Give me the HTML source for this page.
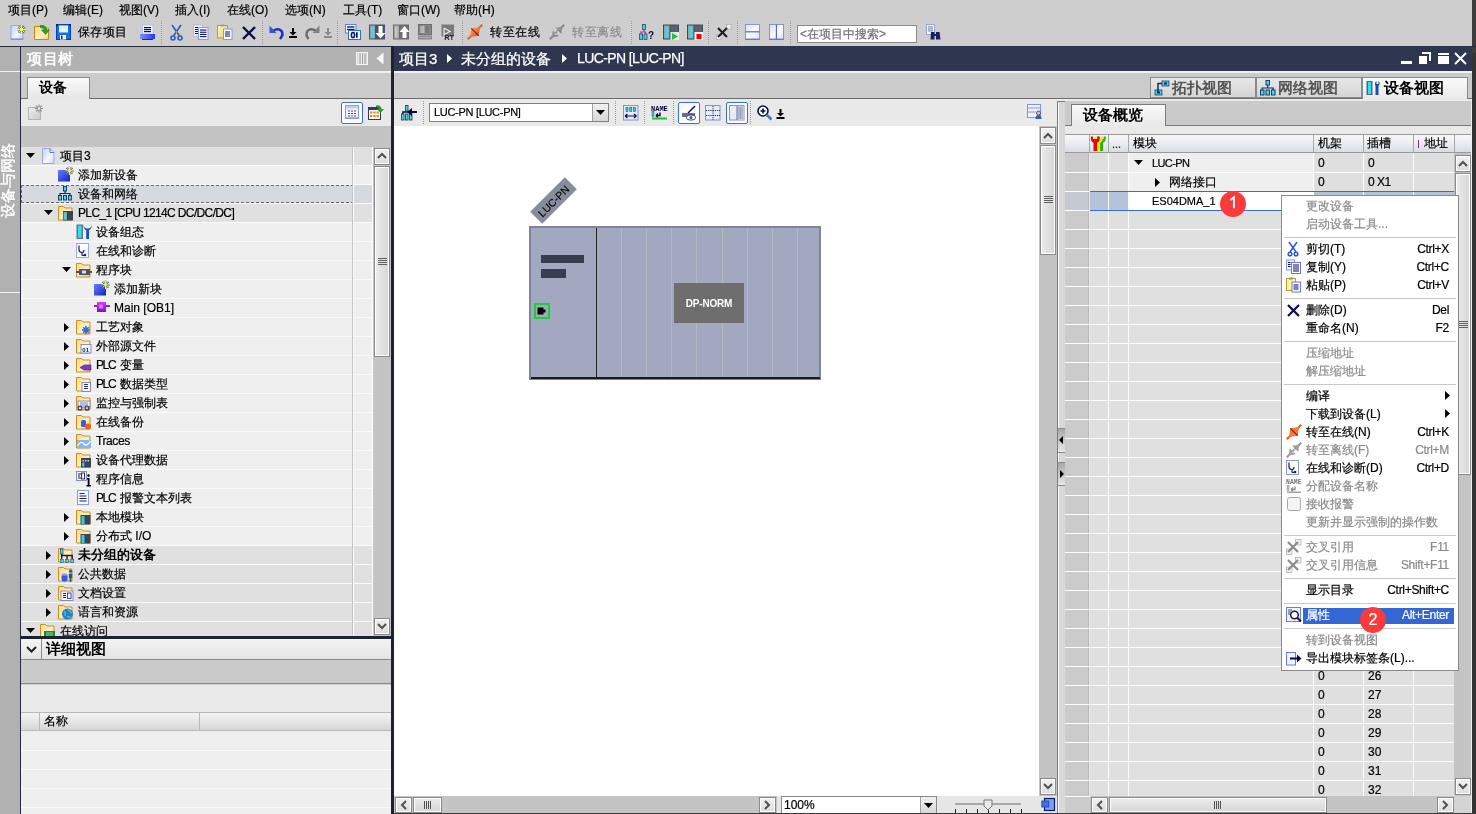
<!DOCTYPE html>
<html><head><meta charset="utf-8">
<style>
*{box-sizing:border-box;margin:0;padding:0}
html,body{width:1476px;height:814px;overflow:hidden;background:#cecece;font-family:"Liberation Sans",sans-serif;font-size:12px;color:#000}
.a{position:absolute}
.t{position:absolute;white-space:nowrap;line-height:14px;-webkit-text-stroke:0.2px currentColor}
[style*="font-weight:bold"]{-webkit-text-stroke:0 !important}
#wrap{position:absolute;left:0;top:0;width:1476px;height:814px;overflow:hidden;will-change:transform}
svg{position:absolute;overflow:visible}
.sep{position:absolute;width:1px;border-left:1px dotted #9a9a9a}
</style></head><body><div id="wrap">

<!-- MENU BAR -->
<div class="a" style="left:0;top:0;width:1476px;height:46px;background:#cecece"></div>
<div class="t" style="left:8px;top:3px">项目(P)</div>
<div class="t" style="left:63px;top:3px">编辑(E)</div>
<div class="t" style="left:119px;top:3px">视图(V)</div>
<div class="t" style="left:175px;top:3px">插入(I)</div>
<div class="t" style="left:227px;top:3px">在线(O)</div>
<div class="t" style="left:285px;top:3px">选项(N)</div>
<div class="t" style="left:343px;top:3px">工具(T)</div>
<div class="t" style="left:397px;top:3px">窗口(W)</div>
<div class="t" style="left:454px;top:3px">帮助(H)</div>
<div class="a" style="left:1472px;top:0;width:4px;height:53px;background:#3c3c3c"></div>

<!-- TOOLBAR -->
<svg style="left:10px;top:24px" width="16" height="16" viewBox="0 0 16 16">
<defs><linearGradient id="pg" x1="0" y1="0" x2="1" y2="1"><stop offset="0" stop-color="#c8d0ff"/><stop offset=".6" stop-color="#f4f6ff"/><stop offset="1" stop-color="#c0c8f8"/></linearGradient></defs>
<rect x="1" y="1.5" width="12" height="14" fill="url(#pg)" stroke="#9aa4f0" stroke-width="1"/>
<rect x="1" y="14.5" width="12" height="1" fill="#6a78e8"/>
<g stroke="#1a3a9a" stroke-width="1.6"><line x1="11.5" y1="1" x2="11.5" y2="10"/><line x1="7" y1="5.5" x2="16" y2="5.5"/><line x1="8.3" y1="2.3" x2="14.7" y2="8.7"/><line x1="14.7" y1="2.3" x2="8.3" y2="8.7"/></g>
<g stroke="#ffff30" stroke-width="1"><line x1="11.5" y1="1" x2="11.5" y2="10"/><line x1="7" y1="5.5" x2="16" y2="5.5"/><line x1="8.3" y1="2.3" x2="14.7" y2="8.7"/><line x1="14.7" y1="2.3" x2="8.3" y2="8.7"/></g>
<circle cx="11.5" cy="5.5" r="1.8" fill="#ffff30"/></svg>
<svg style="left:34px;top:24px" width="17" height="16" viewBox="0 0 17 16">
<defs><linearGradient id="fd" x1="0" y1="0" x2="1" y2="1"><stop offset="0" stop-color="#ffd878"/><stop offset=".6" stop-color="#fff0c0"/><stop offset="1" stop-color="#f8d070"/></linearGradient></defs>
<path d="M0.5 2.5h5l1.5 1.5h7.5v11.5h-14z" fill="url(#fd)" stroke="#c08818" stroke-width="1"/>
<path d="M6 1.5 Q12 0.5 13 6 L15.5 6 L11.5 10.5 L7.5 6 L10 6 Q9.5 3 6 3z" fill="#28a028" stroke="#1a7a1a" stroke-width=".5"/></svg>
<svg style="left:56px;top:24px" width="15" height="16" viewBox="0 0 15 16">
<rect x="0.5" y="0.5" width="14" height="15" fill="#1870e0" stroke="#0a40b0"/>
<rect x="3" y="1.5" width="9" height="7" fill="#e4f0fa"/>
<rect x="4" y="11" width="6" height="4.5" fill="#fff"/><rect x="5" y="11.5" width="1.6" height="3.5" fill="#0a3090"/>
<rect x="0.5" y="0.5" width="1.2" height="1.2" fill="#000"/><rect x="13.3" y="0.5" width="1.2" height="1.2" fill="#000"/></svg>
<div class="t" style="left:78px;top:25px;font-size:12px;letter-spacing:0.4px">保存项目</div>
<svg style="left:140px;top:24px" width="16" height="17" viewBox="0 0 16 17">
<defs><linearGradient id="pr" x1="0" y1="0" x2="1" y2="0"><stop offset="0" stop-color="#7a90ff"/><stop offset="1" stop-color="#2838e0"/></linearGradient></defs>
<rect x="2.5" y="1" width="10.5" height="9" fill="#f4f6ff" stroke="#b8c0ec" stroke-width="1"/>
<rect x="4" y="3" width="7" height="1.2" fill="#0a1060"/><rect x="4" y="5" width="7" height="1.2" fill="#0a1060"/><rect x="4" y="7" width="7" height="1.2" fill="#0a1060"/>
<rect x="0" y="10" width="15" height="5" fill="url(#pr)"/><rect x="2" y="15" width="11" height="1" fill="#2020c0"/></svg>
<div class="sep" style="left:161px;top:21px;height:23px"></div>
<svg style="left:170px;top:24px" width="14" height="17" viewBox="0 0 14 17">
<g stroke="#2a5ac8" stroke-width="1.6" fill="none"><line x1="2" y1="1" x2="9.5" y2="12"/><line x1="11" y1="1" x2="3.5" y2="12"/>
<circle cx="3" cy="14" r="2"/><circle cx="10" cy="14" r="2"/></g><circle cx="6.5" cy="8" r="0.9" fill="#e0b020"/></svg>
<svg style="left:193px;top:24px" width="16" height="17" viewBox="0 0 16 17">
<rect x="0.5" y="1" width="9" height="11" fill="#f4f6ff" stroke="#b0b8f0"/>
<g fill="#0a1060"><rect x="2" y="3" width="3" height="1"/><rect x="2" y="5" width="3" height="1"/><rect x="2" y="7" width="3" height="1"/><rect x="2" y="9" width="3" height="1"/></g>
<rect x="5.5" y="3.5" width="9.5" height="12" fill="#f8faff" stroke="#8a98e8"/>
<g fill="#0a1060"><rect x="7" y="5.5" width="6.5" height="1.1"/><rect x="7" y="7.7" width="6.5" height="1.1"/><rect x="7" y="9.9" width="6.5" height="1.1"/><rect x="7" y="12.1" width="6.5" height="1.1"/></g></svg>
<svg style="left:217px;top:24px" width="16" height="17" viewBox="0 0 16 17">
<defs><linearGradient id="cb" x1="0" y1="0" x2="1" y2="1"><stop offset="0" stop-color="#fff8a0"/><stop offset="1" stop-color="#e8d090"/></linearGradient></defs>
<rect x="0.5" y="1.5" width="10" height="12.5" fill="url(#cb)" stroke="#c89830"/>
<rect x="3.5" y="0.5" width="4" height="2" fill="#a0a0a0"/>
<rect x="6.5" y="5" width="8.5" height="10.5" fill="#f8faff" stroke="#8a98e8"/>
<g fill="#0a1060"><rect x="8" y="7.5" width="5" height="1"/><rect x="8" y="9.5" width="5" height="1"/><rect x="8" y="11.5" width="5" height="1"/></g></svg>
<svg style="left:242px;top:26px" width="14" height="14" viewBox="0 0 14 14"><g stroke="#0a0a50" stroke-width="2.4"><line x1="1" y1="1" x2="13" y2="13"/><line x1="13" y1="1" x2="1" y2="13"/></g></svg>
<div class="sep" style="left:262px;top:21px;height:23px"></div>
<svg style="left:269px;top:25px" width="16" height="16" viewBox="0 0 16 16">
<path d="M4 6 Q9 2.5 12.5 6 Q15 9.5 11 14" fill="none" stroke="#2030c0" stroke-width="2.6"/>
<path d="M0.5 0.5 L0.5 8 L7.5 8z" fill="#3a50e0"/></svg>
<svg style="left:289px;top:28px" width="8" height="10" viewBox="0 0 8 10"><path d="M4 0v5" stroke="#000" stroke-width="2"/><path d="M0.5 4h7L4 7.5z" fill="#000"/><rect x="0" y="8" width="8" height="2" fill="#000"/></svg>
<svg style="left:304px;top:25px" width="16" height="16" viewBox="0 0 16 16">
<path d="M12 6 Q7 2.5 3.5 6 Q1 9.5 4.5 14" fill="none" stroke="#6a6a6a" stroke-width="2.4"/>
<path d="M15.5 0.5 L15.5 8 L8.5 8z" fill="#808080"/></svg>
<svg style="left:324px;top:28px" width="8" height="10" viewBox="0 0 8 10"><path d="M4 0v5" stroke="#8a8a8a" stroke-width="2"/><path d="M0.5 4h7L4 7.5z" fill="#8a8a8a"/><rect x="0" y="8" width="8" height="2" fill="#8a8a8a"/></svg>
<div class="sep" style="left:337px;top:21px;height:23px"></div>
<svg style="left:345px;top:24px" width="16" height="17" viewBox="0 0 16 17">
<rect x="0.5" y="0.5" width="10.5" height="8.5" fill="#f8faff" stroke="#5a80d8"/>
<rect x="2" y="2.3" width="7.5" height="1.3" fill="#0a1060"/><rect x="2" y="4.8" width="7.5" height="1.3" fill="#0a1060"/>
<rect x="3.5" y="6.5" width="12" height="9" fill="#eef4ff" stroke="#3070b8"/>
<ellipse cx="8" cy="11" rx="1.6" ry="2.6" fill="none" stroke="#0a1060" stroke-width="1.5"/><rect x="11" y="8.3" width="1.7" height="5.4" fill="#0a1060"/></svg>
<svg style="left:369px;top:24px" width="16" height="17" viewBox="0 0 16 17">
<rect x="0" y="0.5" width="16" height="15" fill="#4a5266"/><rect x="1" y="1.5" width="5" height="13" fill="#9aa0aa"/><rect x="2" y="2.5" width="3" height="11" fill="#30e0e8"/>
<rect x="7" y="1.5" width="8" height="13" fill="#4a5266"/>
<path d="M9.5 2v7h-3l5 5.5 5-5.5h-3v-7z" fill="#fff"/></svg>
<svg style="left:393px;top:24px" width="16" height="17" viewBox="0 0 16 17">
<rect x="0" y="0.5" width="16" height="15" fill="#6a6a6a"/><rect x="1" y="1.5" width="5" height="13" fill="#a8a8a8"/><rect x="2" y="2.5" width="2.5" height="11" fill="#c4c4c4"/>
<rect x="7" y="1.5" width="8" height="13" fill="#707070"/>
<path d="M9.5 14v-6h-3l5-6 5 6h-3v6z" fill="#fff"/></svg>
<svg style="left:418px;top:24px" width="14" height="17" viewBox="0 0 14 17">
<rect x="0.5" y="0.5" width="13" height="10" fill="#8a8a8a" stroke="#6e6e6e"/>
<rect x="2.5" y="2" width="4" height="7" fill="#b8b8b8"/><rect x="7" y="2" width="4.5" height="7" fill="#7a7a7a"/>
<rect x="0" y="11.5" width="14" height="4" fill="#8a8a8a"/><rect x="1" y="13" width="12" height="1" fill="#b0b0b0"/></svg>
<svg style="left:441px;top:24px" width="16" height="17" viewBox="0 0 16 17">
<rect x="0.5" y="0.5" width="12.5" height="12" fill="#7a7a7a"/>
<path d="M3 4v10 M3 4l6 3.5-6 3" fill="none" stroke="#f0f0f0" stroke-width="1.1"/>
<text x="3.2" y="15.8" font-size="7.5" font-weight="bold" fill="#202020" font-family="Liberation Sans">RT</text></svg>
<div class="sep" style="left:462px;top:21px;height:23px"></div>
<svg style="left:467px;top:24px" width="16" height="16" viewBox="0 0 16 16">
<defs><linearGradient id="og" x1="0" y1="0" x2="1" y2="1"><stop offset="0" stop-color="#ffb070"/><stop offset="1" stop-color="#e04010"/></linearGradient></defs>
<line x1="0.8" y1="15.2" x2="15.2" y2="0.8" stroke="#f06020" stroke-width="2.2"/>
<path d="M3 13 L4.3 4.3 L13 3 L11.7 11.7z" fill="url(#og)"/>
<line x1="4.3" y1="4.3" x2="11.7" y2="11.7" stroke="#7a1a00" stroke-width="1.1"/></svg>
<div class="t" style="left:490px;top:25px;font-size:12px;letter-spacing:0.6px">转至在线</div>
<svg style="left:549px;top:24px" width="16" height="16" viewBox="0 0 16 16">
<defs><linearGradient id="gg" x1="0" y1="0" x2="1" y2="1"><stop offset="0" stop-color="#b8b8b8"/><stop offset="1" stop-color="#6a6a6a"/></linearGradient></defs>
<line x1="0.8" y1="15.2" x2="15.2" y2="0.8" stroke="#8a8a8a" stroke-width="2.2"/>
<path d="M2.5 13.5 L3.8 6.2 L6.2 8.6 L8.6 6.2 L6.2 3.8 L13.5 2.5 L12.2 9.8 L9.8 7.4 L7.4 9.8 L9.8 12.2z" fill="url(#gg)"/>
<path d="M6.5 10.5 L7.5 9.5 M8.5 8.5 L9.5 7.5" stroke="#f4f4f4" stroke-width="1.3"/></svg>
<div class="t" style="left:572px;top:25px;font-size:12px;letter-spacing:0.6px;color:#8c8c8c">转至离线</div>
<div class="sep" style="left:631px;top:21px;height:23px"></div>
<svg style="left:639px;top:24px" width="16" height="17" viewBox="0 0 16 17">
<g fill="#30d8e8" stroke="#404858" stroke-width=".8"><rect x="3.5" y="0.5" width="3" height="5"/><rect x="0.5" y="10" width="3" height="5.5"/><rect x="5" y="10" width="3" height="5.5"/></g>
<path d="M5 5.5v2 M2 10v-2h4.5v2" stroke="#c020c0" fill="none" stroke-width="1.2"/>
<text x="9" y="14.5" font-size="10" font-weight="bold" fill="#0a0a40" font-family="Liberation Sans">?</text></svg>
<svg style="left:663px;top:24px" width="16" height="17" viewBox="0 0 16 17">
<rect x="0" y="0.5" width="16" height="15" fill="#404858"/><rect x="1" y="1.5" width="5.5" height="13" fill="#9aa0aa"/><rect x="2.3" y="2.5" width="3" height="11" fill="#30e0e8"/>
<rect x="7.5" y="1.5" width="7.5" height="13" fill="#5a6070"/>
<rect x="7.5" y="8" width="8.5" height="8" fill="#e8e8e8"/><path d="M9 9l6 3.5-6 3.5z" fill="#20c040"/></svg>
<svg style="left:687px;top:24px" width="16" height="17" viewBox="0 0 16 17">
<rect x="0" y="0.5" width="16" height="15" fill="#404858"/><rect x="1" y="1.5" width="5.5" height="13" fill="#9aa0aa"/><rect x="2.3" y="2.5" width="3" height="11" fill="#30e0e8"/>
<rect x="7.5" y="1.5" width="7.5" height="13" fill="#5a6070"/>
<rect x="7.5" y="8" width="8.5" height="8" fill="#f0f0f0"/><rect x="9.5" y="10" width="5" height="5" fill="#f00000"/></svg>
<div class="sep" style="left:708px;top:21px;height:23px"></div>
<svg style="left:716px;top:24px" width="16" height="17" viewBox="0 0 16 17">
<rect x="10.5" y="0.5" width="4.5" height="4.5" fill="#f4f4f4" stroke="#a0a0a0" stroke-width=".6"/>
<rect x="0.5" y="11" width="4.5" height="4.5" fill="#f4f4f4" stroke="#a0a0a0" stroke-width=".6"/>
<g stroke="#202020" stroke-width="2.2"><line x1="2" y1="4" x2="11" y2="13"/><line x1="11" y1="4" x2="2" y2="13"/></g></svg>
<div class="sep" style="left:737px;top:21px;height:23px"></div>
<svg style="left:745px;top:24px" width="16" height="17" viewBox="0 0 16 17">
<defs><linearGradient id="wg" x1="0" y1="0" x2="1" y2="1"><stop offset="0" stop-color="#dce0fa"/><stop offset=".5" stop-color="#fafaff"/><stop offset="1" stop-color="#e0e4fa"/></linearGradient></defs>
<rect x="0.5" y="0.5" width="14" height="15" fill="url(#wg)" stroke="#8890e0"/>
<rect x="0.5" y="7.2" width="14" height="1.2" fill="#5a64d8"/><rect x="0.5" y="14.6" width="14" height="1" fill="#5a64d8"/></svg>
<svg style="left:769px;top:24px" width="16" height="17" viewBox="0 0 16 17">
<rect x="0.5" y="0.5" width="14" height="15" fill="url(#wg)" stroke="#8890e0"/>
<rect x="6.8" y="0.5" width="1.2" height="15" fill="#5a64d8"/><rect x="0.5" y="14.6" width="14" height="1" fill="#5a64d8"/></svg>
<div class="sep" style="left:790px;top:21px;height:23px"></div>
<div class="a" style="left:797px;top:25px;width:120px;height:18px;background:#fff;border:1px solid #8a8a8a"></div>
<div class="t" style="left:800px;top:27px;font-size:12px;color:#707070">&lt;在项目中搜索&gt;</div>
<svg style="left:926px;top:24px" width="16" height="17" viewBox="0 0 16 17">
<rect x="0.5" y="0.5" width="8" height="10" fill="#f0f4ff" stroke="#8898e0" stroke-width=".8"/>
<g fill="#5a6070"><rect x="2" y="2.5" width="5" height=".8"/><rect x="2" y="4.5" width="5" height=".8"/><rect x="2" y="6.5" width="5" height=".8"/></g>
<path d="M5 8h3.5v7.5h-4zM10 8h3.5l1 7.5h-4.5z" fill="#1a2060"/><rect x="8" y="10" width="2.5" height="2" fill="#1a2060"/></svg>

<!-- LEFT STRIP -->
<div class="a" style="left:0;top:46px;width:20px;height:768px;background:#b1b1b1"></div>
<div class="a" style="left:0;top:71px;width:20px;height:1px;background:#f4f4f4"></div>
<div class="a" style="left:0;top:292px;width:20px;height:1px;background:#f4f4f4"></div>
<div class="t" style="left:-32px;top:173px;width:80px;height:16px;line-height:16px;text-align:center;color:#fff;font-size:15px;transform:rotate(-90deg);-webkit-text-stroke:0.4px #fff">设备与网络</div>
<div class="a" style="left:0;top:46px;width:1476px;height:1px;background:#232a3a"></div>
<div class="a" style="left:20px;top:46px;width:1px;height:768px;background:#232a3a"></div>

<!-- PROJECT TREE -->
<div class="a" style="left:21px;top:47px;width:370px;height:24px;background:#b2b2b2"></div>
<div class="t" style="left:27px;top:50px;color:#fff;font-size:15px;line-height:17px;letter-spacing:0.6px;-webkit-text-stroke:0.5px #fff">项目树</div>
<div class="a" style="left:21px;top:71px;width:370px;height:2px;background:#f0f0f0"></div>
<div class="a" style="left:21px;top:73px;width:370px;height:26px;background:#cbcbcb"></div>
<div class="a" style="left:21px;top:98px;width:370px;height:1px;background:#6d6d6d"></div>
<div class="a" style="left:27px;top:77px;width:63px;height:22px;background:linear-gradient(#fafafa,#e6e6e6);border:1px solid #8a8a8a;border-bottom:none"></div>
<div class="t" style="left:39px;top:80px;font-size:14px;font-weight:bold">设备</div>
<div class="a" style="left:21px;top:99px;width:370px;height:27px;background:#e9e9e9"></div>
<div class="a" style="left:21px;top:126px;width:370px;height:21px;background:#c4c4c4"></div>
<svg width="0" height="0" style="position:absolute"><defs>
<linearGradient id="fold" x1="0" y1="0" x2="1" y2="1"><stop offset="0" stop-color="#ffd470"/><stop offset=".55" stop-color="#fff2c8"/><stop offset="1" stop-color="#f0c060"/></linearGradient>
<linearGradient id="page" x1="0" y1="0" x2="1" y2="1"><stop offset="0" stop-color="#c8d0ff"/><stop offset=".6" stop-color="#f6f8ff"/><stop offset="1" stop-color="#c8d0f8"/></linearGradient>
<linearGradient id="blue" x1="0" y1="0" x2="1" y2="1"><stop offset="0" stop-color="#6a80ff"/><stop offset="1" stop-color="#1020c0"/></linearGradient>
<linearGradient id="purp" x1="0" y1="0" x2="0" y2="1"><stop offset="0" stop-color="#d040f0"/><stop offset="1" stop-color="#8010c0"/></linearGradient>
</defs></svg>
<div class="a" style="left:21px;top:147px;width:352px;height:489px;overflow:hidden">
<div class="a" style="left:0;top:0px;width:352px;height:18px;background:#e0e0e0"></div>
<div class="a" style="left:0;top:18px;width:352px;height:1px;background:#fafafa"></div>
<div class="a" style="left:331px;top:0px;width:21px;height:18px;background:#e0e0e0"></div>
<svg style="left:5px;top:6px" width="9" height="5" viewBox="0 0 9 5"><path d="M0 0h9L4.5 5z" fill="#000"/></svg>
<svg style="left:19px;top:1px" width="16" height="16" viewBox="0 0 16 16"><path d="M2.5 0.5h7.5l4 4v11h-11.5z" fill="url(#page)" stroke="#9aa8f0"/><path d="M10 0.5v4h4" fill="none" stroke="#6070e0"/></svg>
<div class="t" style="left:39px;top:2px;">项目3</div>
<div class="a" style="left:0;top:19px;width:352px;height:18px;background:#efefef"></div>
<div class="a" style="left:0;top:37px;width:352px;height:1px;background:#fafafa"></div>
<div class="a" style="left:331px;top:19px;width:21px;height:18px;background:#efefef"></div>
<svg style="left:37px;top:20px" width="16" height="16" viewBox="0 0 16 16"><rect x="0" y="3" width="12" height="11.5" fill="url(#blue)"/><g stroke="#1a3a9a" stroke-width="1.5"><line x1="11.5" y1="-0.40000000000000036" x2="11.5" y2="8.0"/><line x1="7.3" y1="3.8" x2="15.7" y2="3.8"/><line x1="8.56" y1="0.8599999999999999" x2="14.44" y2="6.74"/><line x1="14.44" y1="0.8599999999999999" x2="8.56" y2="6.74"/></g><g stroke="#ffff20" stroke-width="1"><line x1="11.5" y1="-0.40000000000000036" x2="11.5" y2="8.0"/><line x1="7.3" y1="3.8" x2="15.7" y2="3.8"/><line x1="8.56" y1="0.8599999999999999" x2="14.44" y2="6.74"/><line x1="14.44" y1="0.8599999999999999" x2="8.56" y2="6.74"/></g><circle cx="11.5" cy="3.8" r="1.2" fill="#ffff20"/></svg>
<div class="t" style="left:57px;top:21px;">添加新设备</div>
<div class="a" style="left:0;top:38px;width:352px;height:18px;background:#d6d9de"></div>
<div class="a" style="left:0;top:56px;width:352px;height:1px;background:#fafafa"></div>
<div class="a" style="left:331px;top:38px;width:21px;height:18px;background:#d6d9de"></div>
<div class="a" style="left:0;top:38px;width:333px;height:18px;border:1px dashed #6a6a6a"></div>
<svg style="left:37px;top:39px" width="16" height="16" viewBox="0 0 16 16"><g fill="#30e0f0" stroke="#1a2a5a" stroke-width=".9"><rect x="5.5" y="0.5" width="3" height="4.5"/><rect x="0.5" y="9.5" width="3" height="4.5"/><rect x="5.5" y="9.5" width="3" height="4.5"/><rect x="10.5" y="9.5" width="3" height="4.5"/></g><path d="M7 5v2.5 M2 9.5v-2h10v2" stroke="#1a2a5a" fill="none" stroke-width="1.2"/></svg>
<div class="t" style="left:57px;top:40px;">设备和网络</div>
<div class="a" style="left:0;top:57px;width:352px;height:18px;background:#e0e0e0"></div>
<div class="a" style="left:0;top:75px;width:352px;height:1px;background:#fafafa"></div>
<div class="a" style="left:331px;top:57px;width:21px;height:18px;background:#e0e0e0"></div>
<svg style="left:23px;top:63px" width="9" height="5" viewBox="0 0 9 5"><path d="M0 0h9L4.5 5z" fill="#000"/></svg>
<svg style="left:37px;top:58px" width="16" height="16" viewBox="0 0 16 16"><path d="M0.5 1.5h5l1.5 1.5h7v12h-13.5z" fill="url(#fold)" stroke="#c89020" stroke-width="1"/><rect x="5" y="6" width="10" height="9.5" fill="#3a4458"/><rect x="5.5" y="7" width="3.5" height="8" fill="#8a94a4"/><rect x="6.3" y="8" width="2" height="6" fill="#30e0f0"/></svg>
<div class="t" style="left:57px;top:59px;"><span style="letter-spacing:-0.64px">PLC_1 [CPU 1214C DC/DC/DC]</span></div>
<div class="a" style="left:0;top:76px;width:352px;height:18px;background:#efefef"></div>
<div class="a" style="left:0;top:94px;width:352px;height:1px;background:#fafafa"></div>
<div class="a" style="left:331px;top:76px;width:21px;height:18px;background:#efefef"></div>
<svg style="left:55px;top:77px" width="16" height="16" viewBox="0 0 16 16"><rect x="0.5" y="0.5" width="6.5" height="14.5" fill="#6a7484"/><rect x="2" y="1.8" width="3.5" height="12" fill="#30e0f0"/><path d="M7.8 0.8 Q7 5 10.2 6.2 V15 H13 V6.2 Q16.2 5 15.4 0.8 L14.8 3.6 L12.6 4.6 L10.6 4.6 L8.4 3.6z" fill="#1a50b8"/></svg>
<div class="t" style="left:75px;top:78px;">设备组态</div>
<div class="a" style="left:0;top:95px;width:352px;height:18px;background:#efefef"></div>
<div class="a" style="left:0;top:113px;width:352px;height:1px;background:#fafafa"></div>
<div class="a" style="left:331px;top:95px;width:21px;height:18px;background:#efefef"></div>
<svg style="left:55px;top:96px" width="16" height="16" viewBox="0 0 16 16"><rect x="0.5" y="0.5" width="12" height="14" fill="#fafcff" stroke="#9aa8f0"/><path d="M3 2.5v4 Q3 9.5 6 9.5 Q8 9.5 8 7 M6 9.5 L6 12 Q6 13 9 12" fill="none" stroke="#1a2060" stroke-width="1.2"/><circle cx="9" cy="12" r="1.3" fill="#1a2060"/></svg>
<div class="t" style="left:75px;top:97px;">在线和诊断</div>
<div class="a" style="left:0;top:114px;width:352px;height:18px;background:#efefef"></div>
<div class="a" style="left:0;top:132px;width:352px;height:1px;background:#fafafa"></div>
<div class="a" style="left:331px;top:114px;width:21px;height:18px;background:#efefef"></div>
<svg style="left:41px;top:120px" width="9" height="5" viewBox="0 0 9 5"><path d="M0 0h9L4.5 5z" fill="#000"/></svg>
<svg style="left:55px;top:115px" width="16" height="16" viewBox="0 0 16 16"><path d="M0.5 1.5h5l1.5 1.5h7v12h-13.5z" fill="url(#fold)" stroke="#c89020" stroke-width="1"/><rect x="3" y="7" width="11" height="6" fill="#4a5468"/><rect x="6" y="8.5" width="4" height="3" fill="#d8dce8"/><rect x="0" y="9" width="3" height="2" fill="#4a5468"/><rect x="14" y="9" width="2" height="2" fill="#4a5468"/></svg>
<div class="t" style="left:75px;top:116px;">程序块</div>
<div class="a" style="left:0;top:133px;width:352px;height:18px;background:#efefef"></div>
<div class="a" style="left:0;top:151px;width:352px;height:1px;background:#fafafa"></div>
<div class="a" style="left:331px;top:133px;width:21px;height:18px;background:#efefef"></div>
<svg style="left:73px;top:134px" width="16" height="16" viewBox="0 0 16 16"><rect x="0" y="3" width="12" height="11.5" fill="url(#blue)"/><g stroke="#1a3a9a" stroke-width="1.5"><line x1="11.5" y1="-0.40000000000000036" x2="11.5" y2="8.0"/><line x1="7.3" y1="3.8" x2="15.7" y2="3.8"/><line x1="8.56" y1="0.8599999999999999" x2="14.44" y2="6.74"/><line x1="14.44" y1="0.8599999999999999" x2="8.56" y2="6.74"/></g><g stroke="#ffff20" stroke-width="1"><line x1="11.5" y1="-0.40000000000000036" x2="11.5" y2="8.0"/><line x1="7.3" y1="3.8" x2="15.7" y2="3.8"/><line x1="8.56" y1="0.8599999999999999" x2="14.44" y2="6.74"/><line x1="14.44" y1="0.8599999999999999" x2="8.56" y2="6.74"/></g><circle cx="11.5" cy="3.8" r="1.2" fill="#ffff20"/></svg>
<div class="t" style="left:93px;top:135px;">添加新块</div>
<div class="a" style="left:0;top:152px;width:352px;height:18px;background:#efefef"></div>
<div class="a" style="left:0;top:170px;width:352px;height:1px;background:#fafafa"></div>
<div class="a" style="left:331px;top:152px;width:21px;height:18px;background:#efefef"></div>
<svg style="left:73px;top:153px" width="16" height="16" viewBox="0 0 16 16"><rect x="3" y="2" width="9" height="10" fill="url(#purp)"/><rect x="0" y="5" width="3" height="2" fill="#9020d0"/><rect x="12" y="5" width="4" height="2" fill="#9020d0"/><rect x="5" y="4.5" width="4" height="4" fill="#e070ff"/></svg>
<div class="t" style="left:93px;top:154px;">Main [OB1]</div>
<div class="a" style="left:0;top:171px;width:352px;height:18px;background:#efefef"></div>
<div class="a" style="left:0;top:189px;width:352px;height:1px;background:#fafafa"></div>
<div class="a" style="left:331px;top:171px;width:21px;height:18px;background:#efefef"></div>
<svg style="left:43px;top:176px" width="5" height="9" viewBox="0 0 5 9"><path d="M0 0v9L5 4.5z" fill="#000"/></svg>
<svg style="left:55px;top:172px" width="16" height="16" viewBox="0 0 16 16"><path d="M0.5 1.5h5l1.5 1.5h7v12h-13.5z" fill="url(#fold)" stroke="#c89020" stroke-width="1"/><g stroke="#2a6ae0" stroke-width="1.6"><line x1="10" y1="7" x2="10" y2="15"/><line x1="6" y1="11" x2="14" y2="11"/><line x1="7.2" y1="8.2" x2="12.8" y2="13.8"/><line x1="12.8" y1="8.2" x2="7.2" y2="13.8"/></g></svg>
<div class="t" style="left:75px;top:173px;">工艺对象</div>
<div class="a" style="left:0;top:190px;width:352px;height:18px;background:#efefef"></div>
<div class="a" style="left:0;top:208px;width:352px;height:1px;background:#fafafa"></div>
<div class="a" style="left:331px;top:190px;width:21px;height:18px;background:#efefef"></div>
<svg style="left:43px;top:195px" width="5" height="9" viewBox="0 0 5 9"><path d="M0 0v9L5 4.5z" fill="#000"/></svg>
<svg style="left:55px;top:191px" width="16" height="16" viewBox="0 0 16 16"><path d="M0.5 1.5h5l1.5 1.5h7v12h-13.5z" fill="url(#fold)" stroke="#c89020" stroke-width="1"/><rect x="5" y="6.5" width="10" height="8.5" fill="#f4f6ff" stroke="#6a78c0" stroke-width=".8"/><text x="6.3" y="13.5" font-size="6" font-weight="bold" fill="#1a2060" font-family="Liberation Sans">01</text></svg>
<div class="t" style="left:75px;top:192px;">外部源文件</div>
<div class="a" style="left:0;top:209px;width:352px;height:18px;background:#efefef"></div>
<div class="a" style="left:0;top:227px;width:352px;height:1px;background:#fafafa"></div>
<div class="a" style="left:331px;top:209px;width:21px;height:18px;background:#efefef"></div>
<svg style="left:43px;top:214px" width="5" height="9" viewBox="0 0 5 9"><path d="M0 0v9L5 4.5z" fill="#000"/></svg>
<svg style="left:55px;top:210px" width="16" height="16" viewBox="0 0 16 16"><path d="M0.5 1.5h5l1.5 1.5h7v12h-13.5z" fill="url(#fold)" stroke="#c89020" stroke-width="1"/><path d="M4 10.5 L8 8 H15 V13 H8z" fill="#7a3ad0" stroke="#4a1a90" stroke-width=".6"/></svg>
<div class="t" style="left:75px;top:211px;"><span style="letter-spacing:-1.4px;margin-right:1.4px">PLC</span> 变量</div>
<div class="a" style="left:0;top:228px;width:352px;height:18px;background:#efefef"></div>
<div class="a" style="left:0;top:246px;width:352px;height:1px;background:#fafafa"></div>
<div class="a" style="left:331px;top:228px;width:21px;height:18px;background:#efefef"></div>
<svg style="left:43px;top:233px" width="5" height="9" viewBox="0 0 5 9"><path d="M0 0v9L5 4.5z" fill="#000"/></svg>
<svg style="left:55px;top:229px" width="16" height="16" viewBox="0 0 16 16"><path d="M0.5 1.5h5l1.5 1.5h7v12h-13.5z" fill="url(#fold)" stroke="#c89020" stroke-width="1"/><rect x="6" y="6.5" width="8.5" height="9" fill="#f4f6ff" stroke="#6a78c0" stroke-width=".8"/><path d="M8 8.5h4 M8 10.5h4 M8 12.5h4" stroke="#1a2060" stroke-width=".9"/></svg>
<div class="t" style="left:75px;top:230px;"><span style="letter-spacing:-1.4px;margin-right:1.4px">PLC</span> 数据类型</div>
<div class="a" style="left:0;top:247px;width:352px;height:18px;background:#efefef"></div>
<div class="a" style="left:0;top:265px;width:352px;height:1px;background:#fafafa"></div>
<div class="a" style="left:331px;top:247px;width:21px;height:18px;background:#efefef"></div>
<svg style="left:43px;top:252px" width="5" height="9" viewBox="0 0 5 9"><path d="M0 0v9L5 4.5z" fill="#000"/></svg>
<svg style="left:55px;top:248px" width="16" height="16" viewBox="0 0 16 16"><path d="M0.5 1.5h5l1.5 1.5h7v12h-13.5z" fill="url(#fold)" stroke="#c89020" stroke-width="1"/><rect x="2" y="6" width="12" height="6" fill="#f4f6ff" stroke="#6a78c0" stroke-width=".8"/><path d="M4 8h8 M4 10h8" stroke="#6070a0" stroke-width=".8"/><circle cx="4" cy="13" r="2" fill="none" stroke="#1a2a80" stroke-width="1.1"/><circle cx="11" cy="13" r="2" fill="none" stroke="#1a2a80" stroke-width="1.1"/></svg>
<div class="t" style="left:75px;top:249px;">监控与强制表</div>
<div class="a" style="left:0;top:266px;width:352px;height:18px;background:#efefef"></div>
<div class="a" style="left:0;top:284px;width:352px;height:1px;background:#fafafa"></div>
<div class="a" style="left:331px;top:266px;width:21px;height:18px;background:#efefef"></div>
<svg style="left:43px;top:271px" width="5" height="9" viewBox="0 0 5 9"><path d="M0 0v9L5 4.5z" fill="#000"/></svg>
<svg style="left:55px;top:267px" width="16" height="16" viewBox="0 0 16 16"><path d="M0.5 1.5h5l1.5 1.5h7v12h-13.5z" fill="url(#fold)" stroke="#c89020" stroke-width="1"/><rect x="5" y="6" width="5" height="7" rx="1.5" fill="#3a5ae0"/><circle cx="12" cy="12.5" r="3" fill="#f06010"/></svg>
<div class="t" style="left:75px;top:268px;">在线备份</div>
<div class="a" style="left:0;top:285px;width:352px;height:18px;background:#efefef"></div>
<div class="a" style="left:0;top:303px;width:352px;height:1px;background:#fafafa"></div>
<div class="a" style="left:331px;top:285px;width:21px;height:18px;background:#efefef"></div>
<svg style="left:43px;top:290px" width="5" height="9" viewBox="0 0 5 9"><path d="M0 0v9L5 4.5z" fill="#000"/></svg>
<svg style="left:55px;top:286px" width="16" height="16" viewBox="0 0 16 16"><path d="M0.5 1.5h5l1.5 1.5h7v12h-13.5z" fill="url(#fold)" stroke="#c89020" stroke-width="1"/><rect x="1" y="7" width="14" height="8" fill="#80b8f0"/><path d="M1.5 13 Q5 7 8 11 Q11 14 14.5 8" fill="none" stroke="#fff" stroke-width="1.3"/></svg>
<div class="t" style="left:75px;top:287px;"><span style="letter-spacing:-0.4px">Traces</span></div>
<div class="a" style="left:0;top:304px;width:352px;height:18px;background:#efefef"></div>
<div class="a" style="left:0;top:322px;width:352px;height:1px;background:#fafafa"></div>
<div class="a" style="left:331px;top:304px;width:21px;height:18px;background:#efefef"></div>
<svg style="left:43px;top:309px" width="5" height="9" viewBox="0 0 5 9"><path d="M0 0v9L5 4.5z" fill="#000"/></svg>
<svg style="left:55px;top:305px" width="16" height="16" viewBox="0 0 16 16"><path d="M0.5 1.5h5l1.5 1.5h7v12h-13.5z" fill="url(#fold)" stroke="#c89020" stroke-width="1"/><rect x="5" y="6" width="10" height="9.5" fill="#3a4458"/><g fill="#d0d4e0"><rect x="6.5" y="8" width="1.5" height="1.5"/><rect x="9" y="8" width="1.5" height="1.5"/><rect x="11.5" y="8" width="1.5" height="1.5"/></g><rect x="6.3" y="10.5" width="2" height="4" fill="#30e0f0"/></svg>
<div class="t" style="left:75px;top:306px;">设备代理数据</div>
<div class="a" style="left:0;top:323px;width:352px;height:18px;background:#efefef"></div>
<div class="a" style="left:0;top:341px;width:352px;height:1px;background:#fafafa"></div>
<div class="a" style="left:331px;top:323px;width:21px;height:18px;background:#efefef"></div>
<svg style="left:55px;top:324px" width="16" height="16" viewBox="0 0 16 16"><rect x="0.5" y="0.5" width="10" height="9" fill="#f4f6ff" stroke="#6a78c0" stroke-width=".8"/><path d="M2 3h3 M2 5h2 M2 7h3" stroke="#1a2060"/><rect x="5.5" y="2" width="3" height="6" fill="none" stroke="#1a2060" stroke-width=".9"/><circle cx="12.5" cy="4.5" r="1.2" fill="#000"/><path d="M11 7h2.5v7h1.5v1.5h-4.5v-1.5h1.2v-5.5h-.7z" fill="#000"/></svg>
<div class="t" style="left:75px;top:325px;">程序信息</div>
<div class="a" style="left:0;top:342px;width:352px;height:18px;background:#efefef"></div>
<div class="a" style="left:0;top:360px;width:352px;height:1px;background:#fafafa"></div>
<div class="a" style="left:331px;top:342px;width:21px;height:18px;background:#efefef"></div>
<svg style="left:55px;top:343px" width="16" height="16" viewBox="0 0 16 16"><rect x="1.5" y="0.5" width="11" height="14" fill="#f8faff" stroke="#8a98e8"/><path d="M3.5 3.5h5 M3.5 6h7 M3.5 8.5h7 M3.5 11h7" stroke="#1a2060" stroke-width="1"/></svg>
<div class="t" style="left:75px;top:344px;"><span style="letter-spacing:-1.4px;margin-right:1.4px">PLC</span> 报警文本列表</div>
<div class="a" style="left:0;top:361px;width:352px;height:18px;background:#efefef"></div>
<div class="a" style="left:0;top:379px;width:352px;height:1px;background:#fafafa"></div>
<div class="a" style="left:331px;top:361px;width:21px;height:18px;background:#efefef"></div>
<svg style="left:43px;top:366px" width="5" height="9" viewBox="0 0 5 9"><path d="M0 0v9L5 4.5z" fill="#000"/></svg>
<svg style="left:55px;top:362px" width="16" height="16" viewBox="0 0 16 16"><path d="M0.5 1.5h5l1.5 1.5h7v12h-13.5z" fill="url(#fold)" stroke="#c89020" stroke-width="1"/><rect x="4.5" y="6" width="10" height="9.5" fill="#3a4458"/><rect x="5.5" y="7" width="3" height="8" fill="#30d0e0"/></svg>
<div class="t" style="left:75px;top:363px;">本地模块</div>
<div class="a" style="left:0;top:380px;width:352px;height:18px;background:#efefef"></div>
<div class="a" style="left:0;top:398px;width:352px;height:1px;background:#fafafa"></div>
<div class="a" style="left:331px;top:380px;width:21px;height:18px;background:#efefef"></div>
<svg style="left:43px;top:385px" width="5" height="9" viewBox="0 0 5 9"><path d="M0 0v9L5 4.5z" fill="#000"/></svg>
<svg style="left:55px;top:381px" width="16" height="16" viewBox="0 0 16 16"><path d="M0.5 1.5h5l1.5 1.5h7v12h-13.5z" fill="url(#fold)" stroke="#c89020" stroke-width="1"/><rect x="4.5" y="6" width="10" height="9.5" fill="#3a4458"/><rect x="5.5" y="7" width="3" height="8" fill="#30d0e0"/></svg>
<div class="t" style="left:75px;top:382px;">分布式 I/O</div>
<div class="a" style="left:0;top:399px;width:352px;height:18px;background:#e0e0e0"></div>
<div class="a" style="left:0;top:417px;width:352px;height:1px;background:#fafafa"></div>
<div class="a" style="left:331px;top:399px;width:21px;height:18px;background:#e0e0e0"></div>
<svg style="left:25px;top:404px" width="5" height="9" viewBox="0 0 5 9"><path d="M0 0v9L5 4.5z" fill="#000"/></svg>
<svg style="left:37px;top:400px" width="16" height="16" viewBox="0 0 16 16"><path d="M0.5 1.5h5l1.5 1.5h7v12h-13.5z" fill="url(#fold)" stroke="#c89020" stroke-width="1"/><rect x="2.5" y="2" width="2.5" height="5" fill="#30e0f0" stroke="#1a2a6a" stroke-width=".6"/><path d="M3.7 7v5 M3.7 8.5h10.5V12 M9 8.5V12" stroke="#0a1a6a" stroke-width="1.4" fill="none"/><g fill="#30e0f0" stroke="#1a2a6a" stroke-width=".5"><rect x="2.2" y="12.5" width="3" height="3"/><rect x="7.5" y="12.5" width="3" height="3"/><rect x="12.8" y="12.5" width="3" height="3"/></g></svg>
<div class="t" style="left:57px;top:401px;font-weight:bold;font-size:12.8px;">未分组的设备</div>
<div class="a" style="left:0;top:418px;width:352px;height:18px;background:#e0e0e0"></div>
<div class="a" style="left:0;top:436px;width:352px;height:1px;background:#fafafa"></div>
<div class="a" style="left:331px;top:418px;width:21px;height:18px;background:#e0e0e0"></div>
<svg style="left:25px;top:423px" width="5" height="9" viewBox="0 0 5 9"><path d="M0 0v9L5 4.5z" fill="#000"/></svg>
<svg style="left:37px;top:419px" width="16" height="16" viewBox="0 0 16 16"><path d="M0.5 1.5h5l1.5 1.5h7v12h-13.5z" fill="url(#fold)" stroke="#c89020" stroke-width="1"/><rect x="3.5" y="8" width="6" height="7.5" rx="2.5" fill="#3a58e8"/><ellipse cx="6.5" cy="8.5" rx="3" ry="1.3" fill="#8aa0ff"/><circle cx="12.5" cy="5.2" r="1.6" fill="#1a5aa0"/><path d="M10.8 7.5h3.4v4.5h-0.8v3.8h-1.8v-3.8h-0.8z" fill="#1a5aa0"/></svg>
<div class="t" style="left:57px;top:420px;">公共数据</div>
<div class="a" style="left:0;top:437px;width:352px;height:18px;background:#e0e0e0"></div>
<div class="a" style="left:0;top:455px;width:352px;height:1px;background:#fafafa"></div>
<div class="a" style="left:331px;top:437px;width:21px;height:18px;background:#e0e0e0"></div>
<svg style="left:25px;top:442px" width="5" height="9" viewBox="0 0 5 9"><path d="M0 0v9L5 4.5z" fill="#000"/></svg>
<svg style="left:37px;top:438px" width="16" height="16" viewBox="0 0 16 16"><path d="M0.5 1.5h5l1.5 1.5h7v12h-13.5z" fill="url(#fold)" stroke="#c89020" stroke-width="1"/><rect x="3" y="6" width="12" height="9.5" fill="#f4f6ff" stroke="#6a78c0" stroke-width=".8"/><path d="M5 8.5h3 M5 10.5h3 M5 12.5h3" stroke="#1a2060"/><rect x="9.5" y="8" width="3.5" height="5.5" fill="none" stroke="#1a2060" stroke-width=".8"/></svg>
<div class="t" style="left:57px;top:439px;">文档设置</div>
<div class="a" style="left:0;top:456px;width:352px;height:18px;background:#e0e0e0"></div>
<div class="a" style="left:0;top:474px;width:352px;height:1px;background:#fafafa"></div>
<div class="a" style="left:331px;top:456px;width:21px;height:18px;background:#e0e0e0"></div>
<svg style="left:25px;top:461px" width="5" height="9" viewBox="0 0 5 9"><path d="M0 0v9L5 4.5z" fill="#000"/></svg>
<svg style="left:37px;top:457px" width="16" height="16" viewBox="0 0 16 16"><path d="M0.5 1.5h5l1.5 1.5h7v12h-13.5z" fill="url(#fold)" stroke="#c89020" stroke-width="1"/><circle cx="9.5" cy="10" r="5.5" fill="#2a7ad8"/><path d="M6 7 Q8 9 7 12 M10 5 Q12 8 14 9 M9 13 Q11 12 13 14" stroke="#40c0a0" stroke-width="1.6" fill="none"/></svg>
<div class="t" style="left:57px;top:458px;">语言和资源</div>
<div class="a" style="left:0;top:475px;width:352px;height:18px;background:#e0e0e0"></div>
<div class="a" style="left:0;top:493px;width:352px;height:1px;background:#fafafa"></div>
<div class="a" style="left:331px;top:475px;width:21px;height:18px;background:#e0e0e0"></div>
<svg style="left:5px;top:481px" width="9" height="5" viewBox="0 0 9 5"><path d="M0 0h9L4.5 5z" fill="#000"/></svg>
<svg style="left:19px;top:476px" width="16" height="16" viewBox="0 0 16 16"><path d="M0.5 1.5h5l1.5 1.5h7v12h-13.5z" fill="url(#fold)" stroke="#c89020" stroke-width="1"/><rect x="4" y="8" width="11" height="7.5" fill="#1a8a3a"/><path d="M6 10h7 M6 12h7" stroke="#a0f0a0" stroke-width=".8"/></svg>
<div class="t" style="left:39px;top:477px;">在线访问</div>
</div>
<div class="a" style="left:352px;top:147px;width:1px;height:489px;background:#c4c4c4"></div><div class="a" style="left:353px;top:147px;width:1px;height:489px;background:#fcfcfc"></div><div class="a" style="left:372px;top:147px;width:1px;height:489px;background:#fcfcfc"></div>
<div class="a" style="left:373px;top:147px;width:18px;height:489px;background:#c4c4c4"></div>
<div class="a" style="left:374px;top:148px;width:16px;height:17px;background:linear-gradient(#f0f0f0,#dcdcdc);border:1px solid #8a8a8a;box-shadow:inset 0 0 0 1px #fff"></div>
<svg style="left:377px;top:152px" width="10" height="7" viewBox="0 0 10 7"><path d="M1 6L5 2L9 6" fill="none" stroke="#505050" stroke-width="2"/></svg>
<div class="a" style="left:374px;top:166px;width:16px;height:191px;background:linear-gradient(90deg,#ececec,#d6d6d6);border:1px solid #8a8a8a;box-shadow:inset 0 0 0 1px #fff"></div>
<svg style="left:378px;top:258px" width="9" height="8" viewBox="0 0 9 8"><path d="M0 .5h9M0 2.5h9M0 4.5h9M0 6.5h9" stroke="#606060" stroke-width="1"/></svg>
<div class="a" style="left:374px;top:618px;width:16px;height:17px;background:linear-gradient(#f0f0f0,#dcdcdc);border:1px solid #8a8a8a;box-shadow:inset 0 0 0 1px #fff"></div>
<svg style="left:377px;top:623px" width="10" height="7" viewBox="0 0 10 7"><path d="M1 1L5 5L9 1" fill="none" stroke="#505050" stroke-width="2"/></svg><div class="a" style="left:21px;top:636px;width:370px;height:3px;background:#1c2232"></div>
<div class="a" style="left:21px;top:639px;width:370px;height:21px;background:linear-gradient(#f4f4f4,#e4e4e4);border-bottom:1px solid #8a8a8a"></div>
<div class="a" style="left:41px;top:639px;width:1px;height:20px;background:#8a8a8a"></div>
<svg style="left:26px;top:646px" width="11" height="7" viewBox="0 0 11 7"><path d="M1 1L5.5 5.5L10 1" fill="none" stroke="#202020" stroke-width="2"/></svg>
<div class="t" style="left:46px;top:641px;font-size:15px;font-weight:bold;line-height:16px">详细视图</div>
<div class="a" style="left:21px;top:660px;width:370px;height:24px;background:#cacaca;border-bottom:1px solid #8a8a8a"></div>
<div class="a" style="left:21px;top:685px;width:370px;height:129px;background:#efefef"></div><div class="a" style="left:21px;top:685px;width:370px;height:27px;background:#eaeaea"></div>
<div class="a" style="left:21px;top:712px;width:370px;height:19px;background:linear-gradient(#f2f2f2,#e6e6e6 50%,#d6d6d6);border-top:1px solid #b8b8b8;border-bottom:1px solid #b8b8b8"></div>
<div class="a" style="left:39px;top:712px;width:1px;height:19px;background:#b8b8b8"></div>
<div class="a" style="left:199px;top:712px;width:1px;height:19px;background:#b8b8b8"></div>
<div class="t" style="left:44px;top:714px">名称</div>
<div class="a" style="left:21px;top:750px;width:370px;height:1px;background:#fafafa"></div>
<div class="a" style="left:21px;top:769px;width:370px;height:1px;background:#fafafa"></div>
<div class="a" style="left:21px;top:788px;width:370px;height:1px;background:#fafafa"></div>
<div class="a" style="left:21px;top:807px;width:370px;height:1px;background:#fafafa"></div><svg style="left:356px;top:52px" width="12" height="13" viewBox="0 0 12 13"><rect x="0.5" y="0.5" width="11" height="12" fill="#d8d8d8" stroke="#f4f4f4"/><path d="M3 1v11M5.5 1v11M8 1v11" stroke="#f4f4f4" stroke-width="1"/><path d="M4 1v11M6.5 1v11M9 1v11" stroke="#a0a0a0" stroke-width="1"/></svg>
<svg style="left:376px;top:52px" width="8" height="13" viewBox="0 0 8 13"><path d="M7.5 0.5v12L0.5 6.5z" fill="#fafafa"/></svg>
<div class="a" style="left:341px;top:102px;width:22px;height:22px;background:#fafcff;border:1px solid #3a70d8;border-radius:2px"></div>
<svg style="left:345px;top:105px" width="15" height="15" viewBox="0 0 15 15"><rect x="0.5" y="0.5" width="13" height="13" fill="#eef0fc" stroke="#9098d8"/><rect x="1" y="1" width="12" height="2.5" fill="#c8cdf0"/><path d="M3 6h2M6 6h2M9 6h2M3 8.5h2M6 8.5h2M9 8.5h2M3 11h2M6 11h2M9 11h2" stroke="#5a5a70" stroke-width="1"/><rect x="0.5" y="12.5" width="13" height="1.5" fill="#8890d8"/></svg>
<svg style="left:368px;top:104px" width="17" height="16" viewBox="0 0 17 16"><rect x="0.5" y="3.5" width="12" height="12" fill="#f8f8ff" stroke="#2a3a6a"/><rect x="0.5" y="3.5" width="12" height="2.5" fill="#2a3a6a"/><g fill="#f08a00"><rect x="2" y="7.5" width="2.3" height="2"/><rect x="5.3" y="7.5" width="2.3" height="2"/><rect x="8.6" y="7.5" width="2.3" height="2"/><rect x="2" y="11" width="2.3" height="2"/><rect x="5.3" y="11" width="2.3" height="2"/><rect x="8.6" y="11" width="2.3" height="2"/></g><path d="M8 1.5 Q13 0.5 13.5 5 L16 5 L12.5 9 L9 5 L11 5 Q10.5 3 8 3z" fill="#28a028"/></svg>
<svg style="left:27px;top:104px" width="17" height="17" viewBox="0 0 17 17"><defs><linearGradient id="gp" x1="0" y1="0" x2="1" y2="1"><stop offset="0" stop-color="#f0f0f0"/><stop offset="1" stop-color="#c8c8c8"/></linearGradient></defs><rect x="1.5" y="3.5" width="12" height="12" fill="url(#gp)" stroke="#b4b4b4"/><g stroke="#8a8a8a" stroke-width="1.1"><line x1="12" y1="0.5" x2="12" y2="8.5"/><line x1="8" y1="4.5" x2="16" y2="4.5"/><line x1="9.2" y1="1.7" x2="14.8" y2="7.3"/><line x1="14.8" y1="1.7" x2="9.2" y2="7.3"/></g><circle cx="12" cy="4.5" r="1.2" fill="#f4f4f4"/></svg>

<!-- divider -->
<div class="a" style="left:391px;top:46px;width:3px;height:768px;background:#1c2232"></div>

<!-- EDITOR -->
<div class="a" style="left:394px;top:46px;width:1078px;height:25px;background:#2e3650"></div>
<div class="a" style="left:394px;top:71px;width:1078px;height:2px;background:#f0f0f0"></div>
<div class="a" style="left:394px;top:73px;width:1078px;height:26px;background:#cbcbcb"></div>
<div class="a" style="left:394px;top:98px;width:1078px;height:1px;background:#6d6d6d"></div>
<div class="a" style="left:394px;top:99px;width:663px;height:27px;background:#e9e9e9"></div>
<div class="a" style="left:394px;top:126px;width:645px;height:670px;background:#fff"></div>
<div class="t" style="left:399px;top:50px;color:#fff;font-size:15px;line-height:17px;-webkit-text-stroke:0.25px #fff">项目3</div>
<svg style="left:447px;top:54px" width="5" height="9" viewBox="0 0 5 9"><path d="M0 0v9L5 4.5z" fill="#fff"/></svg>
<div class="t" style="left:461px;top:50px;color:#fff;font-size:15px;line-height:17px;-webkit-text-stroke:0.25px #fff">未分组的设备</div>
<svg style="left:562px;top:54px" width="5" height="9" viewBox="0 0 5 9"><path d="M0 0v9L5 4.5z" fill="#fff"/></svg>
<div class="t" style="left:577px;top:50px;color:#fff;font-size:14px;line-height:17px;letter-spacing:-0.6px;-webkit-text-stroke:0.25px #fff">LUC-PN [LUC-PN]</div>
<div class="a" style="left:1401px;top:61px;width:11px;height:3px;background:#fff"></div>
<svg style="left:1418px;top:52px" width="14" height="13" viewBox="0 0 14 13"><path d="M4 1h8v8" fill="none" stroke="#fff" stroke-width="2"/><rect x="1" y="4" width="8" height="8" fill="#fff"/></svg>
<div class="a" style="left:1438px;top:53px;width:11px;height:2px;background:#fff"></div><div class="a" style="left:1438px;top:56px;width:11px;height:8px;background:#fff"></div>
<svg style="left:1454px;top:52px" width="13" height="13" viewBox="0 0 13 13"><path d="M1 1L12 12M12 1L1 12" stroke="#fff" stroke-width="2"/></svg>
<div class="a" style="left:1472px;top:53px;width:4px;height:761px;background:#333"></div>
<div class="a" style="left:1150px;top:77px;width:106px;height:21px;background:linear-gradient(#e8e8e8,#d4d4d4);border:1px solid #8a8a8a;border-bottom:1px solid #8a8a8a"></div>
<div class="t" style="left:1172px;top:79px;font-size:15px;font-weight:bold;line-height:17px;color:#555">拓扑视图</div>
<svg style="left:1154px;top:80px" width="16" height="16" viewBox="0 0 16 16"><rect x="8" y="1" width="7" height="5" fill="#30d8e8" stroke="#2a3a6a" stroke-width=".8"/><rect x="1" y="10" width="7" height="5" fill="#30d8e8" stroke="#2a3a6a" stroke-width=".8"/><path d="M8 3.5H4V12.5" fill="none" stroke="#1a2a5a" stroke-width="1.5"/><rect x="10" y="2.5" width="3" height="2" fill="#1a2a5a"/><rect x="3" y="11.5" width="3" height="2" fill="#1a2a5a"/></svg>
<div class="a" style="left:1256px;top:77px;width:106px;height:21px;background:linear-gradient(#e8e8e8,#d4d4d4);border:1px solid #8a8a8a;border-bottom:1px solid #8a8a8a"></div>
<div class="t" style="left:1278px;top:79px;font-size:15px;font-weight:bold;line-height:17px;color:#555">网络视图</div>
<svg style="left:1260px;top:80px" width="16" height="16" viewBox="0 0 16 16"><g fill="#30e0f0" stroke="#1a2a5a" stroke-width=".9"><rect x="6" y="0.5" width="3.5" height="4.5"/><rect x="0.5" y="10" width="3.5" height="5"/><rect x="6" y="10" width="3.5" height="5"/><rect x="11.5" y="10" width="3.5" height="5"/></g><path d="M7.7 5v2.5 M2.2 10v-2h11v2" stroke="#1a2a5a" fill="none" stroke-width="1.2"/></svg>
<div class="a" style="left:1362px;top:77px;width:106px;height:22px;background:linear-gradient(#fafafa,#e9e9e9);border:1px solid #8a8a8a;border-bottom:none"></div>
<div class="t" style="left:1384px;top:79px;font-size:15px;font-weight:bold;line-height:17px;color:#000">设备视图</div>
<svg style="left:1366px;top:80px" width="16" height="16" viewBox="0 0 16 16"><rect x="0.5" y="1" width="6" height="14" fill="#5a6474"/><rect x="2" y="2" width="3" height="12" fill="#30e0f0"/><path d="M10.5 1 Q8 3 9.5 6 L9.5 15 L12.5 15 L12.5 6 Q15 3 12.5 1 L12.5 4 L10.5 4z" fill="#1a4ab0"/></svg>
<svg style="left:401px;top:105px" width="17" height="16" viewBox="0 0 17 16"><g fill="#30e0f0" stroke="#3a4050" stroke-width=".9"><rect x="4.5" y="0.5" width="2.5" height="5.5"/><rect x="0.5" y="9" width="2.5" height="6"/><rect x="4.5" y="9" width="2.5" height="6"/><rect x="8.5" y="9" width="2.5" height="6"/></g><path d="M1.8 9v-2h8v2" stroke="#0a0a40" fill="none" stroke-width="1.3"/><path d="M7 7h9" stroke="#0a0a40" stroke-width="2"/><path d="M6 7L11 3v8z" fill="#0a0a40"/></svg>
<div class="sep" style="left:423px;top:101px;height:23px"></div>
<div class="a" style="left:429px;top:103px;width:180px;height:19px;background:#fff;border:1px solid #808080"></div>
<div class="a" style="left:592px;top:104px;width:16px;height:17px;background:linear-gradient(#f0f0f0,#d8d8d8);border-left:1px solid #a0a0a0"></div>
<svg style="left:596px;top:110px" width="9" height="5" viewBox="0 0 9 5"><path d="M0 0h9L4.5 5z" fill="#000"/></svg>
<div class="t" style="left:434px;top:105px;font-size:11px;letter-spacing:-0.3px">LUC-PN [LUC-PN]</div>
<div class="sep" style="left:615px;top:101px;height:23px"></div>
<svg style="left:623px;top:105px" width="16" height="16" viewBox="0 0 16 16"><rect x="0.5" y="0.5" width="14.5" height="14.5" fill="#e8ecfa" stroke="#8890d8"/><g fill="#30d0e0" stroke="#3a4a70" stroke-width=".6"><rect x="3" y="2.5" width="2" height="4"/><rect x="6.8" y="2.5" width="2" height="4"/><rect x="10.5" y="2.5" width="2" height="4"/></g><path d="M2 11h11.5 M2 11l2.5-2 M2 11l2.5 2 M13.5 11l-2.5-2 M13.5 11l-2.5 2" stroke="#0a0a40" stroke-width="1.1" fill="none"/></svg>
<div class="sep" style="left:644px;top:101px;height:23px"></div>
<svg style="left:651px;top:104px" width="17" height="16" viewBox="0 0 17 16"><text x="0" y="6.5" font-size="7" font-weight="bold" fill="#0a0a40" font-family="Liberation Mono">NAME</text><rect x="1" y="7.5" width="2" height="5" fill="#30d0e0" stroke="#3a4a70" stroke-width=".5"/><path d="M9 8.5v3h-4 M5 11.5l2-2 M5 11.5l2 2" stroke="#0a0a40" stroke-width="1.4" fill="none"/><rect x="1" y="13.5" width="15" height="2" fill="#20c030"/></svg>
<div class="sep" style="left:673px;top:101px;height:23px"></div>
<div class="a" style="left:678px;top:102px;width:22px;height:22px;background:#fafcff;border:1px solid #3a70d8;border-radius:2px"></div>
<svg style="left:681px;top:105px" width="16" height="16" viewBox="0 0 16 16"><path d="M7 8L14 1" stroke="#0a0a40" stroke-width="1.5"/><rect x="1" y="8" width="13" height="4" fill="#6a7080"/><ellipse cx="10" cy="12.5" rx="4.5" ry="2.5" fill="#fff" stroke="#1a2a80" stroke-width=".9"/><circle cx="10" cy="12.5" r="1.5" fill="#2a50e0"/></svg>
<svg style="left:705px;top:105px" width="16" height="16" viewBox="0 0 16 16"><rect x="0.5" y="0.5" width="14.5" height="14.5" fill="#e8ecfa" stroke="#8890d8"/><path d="M1 5.5h14 M1 10.5h14 M8 1v14" stroke="#2a2a5a" stroke-width="1" stroke-dasharray="1.2 1"/></svg>
<div class="a" style="left:726px;top:102px;width:22px;height:22px;background:#fafcff;border:1px solid #3a70d8;border-radius:2px"></div>
<svg style="left:729px;top:105px" width="16" height="16" viewBox="0 0 16 16"><rect x="0.5" y="0.5" width="14.5" height="14.5" fill="#e8ecfa" stroke="#8890d8"/><rect x="8" y="1" width="6.5" height="14" fill="#c8cce0"/><path d="M8 1v14" stroke="#6a70b0"/><path d="M9.5 3h4 M9.5 5h4 M9.5 7h4 M9.5 9h4 M9.5 11h4 M9.5 13h4" stroke="#4a5070" stroke-width=".8" stroke-dasharray="1 .6"/></svg>
<div class="sep" style="left:750px;top:101px;height:23px"></div>
<svg style="left:757px;top:105px" width="16" height="16" viewBox="0 0 16 16"><circle cx="6" cy="6" r="5" fill="#fff" stroke="#0a0a40" stroke-width="1.6"/><path d="M3.5 6h5M6 3.5v5" stroke="#0a0a40" stroke-width="1.6"/><path d="M9.5 9.5l5 5" stroke="#4a7ab0" stroke-width="2.6"/></svg>
<svg style="left:776px;top:109px" width="9" height="10" viewBox="0 0 9 10"><path d="M4.5 0v5" stroke="#000" stroke-width="2"/><path d="M1 4h7L4.5 7.5z" fill="#000"/><rect x="0.5" y="8" width="8" height="2" fill="#000"/></svg>
<svg style="left:1027px;top:104px" width="16" height="16" viewBox="0 0 16 16"><rect x="0.5" y="0.5" width="13" height="13" fill="#f0f2ff" stroke="#8890e0"/><path d="M1 4h12 M1 8h8" stroke="#8890e0"/><circle cx="11.5" cy="9" r="2" fill="#f0c090" stroke="#0a0a40" stroke-width=".6"/><path d="M8.5 15 Q8.5 11 11.5 11 Q14.5 11 14.5 15z" fill="#2a60b0"/></svg>
<div class="a" style="left:528.5px;top:192px;width:49px;height:17px;background:#878c9c;transform:rotate(-45deg);transform-origin:50% 50%"></div>
<div class="t" style="left:528.5px;top:193.5px;width:49px;text-align:center;font-size:10.5px;color:#000;transform:rotate(-45deg);-webkit-text-stroke:0.1px #000">LUC-PN</div>
<div class="a" style="left:529px;top:226px;width:292px;height:154px;background:#a3a8c1;border:2px solid #7f8498;border-top-width:2px"></div>
<div class="a" style="left:531px;top:377px;width:289px;height:1.6px;background:#1a1a1a"></div>
<div class="a" style="left:596px;top:228px;width:1.4px;height:150px;background:#222"></div>
<div class="a" style="left:621px;top:228px;width:1px;height:149px;background:#b4b8c6"></div>
<div class="a" style="left:646px;top:228px;width:1px;height:149px;background:#b4b8c6"></div>
<div class="a" style="left:671px;top:228px;width:1px;height:149px;background:#b4b8c6"></div>
<div class="a" style="left:696px;top:228px;width:1px;height:149px;background:#b4b8c6"></div>
<div class="a" style="left:722px;top:228px;width:1px;height:149px;background:#b4b8c6"></div>
<div class="a" style="left:747px;top:228px;width:1px;height:149px;background:#b4b8c6"></div>
<div class="a" style="left:772px;top:228px;width:1px;height:149px;background:#b4b8c6"></div>
<div class="a" style="left:797px;top:228px;width:1px;height:149px;background:#b4b8c6"></div>
<div class="a" style="left:541px;top:255px;width:43px;height:8px;background:#363e50"></div>
<div class="a" style="left:541px;top:269px;width:25px;height:9px;background:#363e50"></div>
<div class="a" style="left:534px;top:303px;width:16px;height:16px;border:2px solid #18d030"></div>
<svg style="left:536px;top:305px" width="12" height="12" viewBox="0 0 12 12"><path d="M1.5 2.5h6v2h2v3h-2v2h-6z" fill="#000"/></svg>
<div class="a" style="left:674px;top:283px;width:70px;height:40px;background:#6e6e6e"></div>
<div class="t" style="left:674px;top:297px;width:70px;text-align:center;color:#fff;font-weight:bold;font-size:10px;letter-spacing:-0.2px">DP-NORM</div>
<div class="a" style="left:1039px;top:126px;width:18px;height:670px;background:#c4c4c4"></div>
<div class="a" style="left:1040px;top:127px;width:16px;height:17px;background:linear-gradient(#f2f2f2,#dcdcdc);border:1px solid #8a8a8a;box-shadow:inset 0 0 0 1px #fff"></div>
<svg style="left:1043px;top:132px" width="10" height="7" viewBox="0 0 10 7"><path d="M1 6L5 2L9 6" fill="none" stroke="#505050" stroke-width="2"/></svg>
<div class="a" style="left:1040px;top:145px;width:16px;height:110px;background:linear-gradient(90deg,#ececec,#d6d6d6);border:1px solid #8a8a8a;box-shadow:inset 0 0 0 1px #fff"></div>
<svg style="left:1044px;top:196px" width="9" height="8" viewBox="0 0 9 8"><path d="M0 .5h9M0 2.5h9M0 4.5h9M0 6.5h9" stroke="#606060" stroke-width="1"/></svg>
<div class="a" style="left:1040px;top:778px;width:16px;height:17px;background:linear-gradient(#f2f2f2,#dcdcdc);border:1px solid #8a8a8a;box-shadow:inset 0 0 0 1px #fff"></div>
<svg style="left:1043px;top:783px" width="10" height="7" viewBox="0 0 10 7"><path d="M1 1L5 5L9 1" fill="none" stroke="#505050" stroke-width="2"/></svg>
<div class="a" style="left:394px;top:796px;width:663px;height:17px;background:#c4c4c4"></div>
<div class="a" style="left:394px;top:813px;width:1082px;height:1px;background:#3a3a3a"></div>
<div class="a" style="left:395px;top:797px;width:17px;height:16px;background:linear-gradient(#f2f2f2,#dcdcdc);border:1px solid #8a8a8a;box-shadow:inset 0 0 0 1px #fff"></div>
<svg style="left:400px;top:800px" width="7" height="10" viewBox="0 0 7 10"><path d="M6 1L2 5L6 9" fill="none" stroke="#505050" stroke-width="2"/></svg>
<div class="a" style="left:413px;top:797px;width:29px;height:16px;background:linear-gradient(#ececec,#d6d6d6);border:1px solid #8a8a8a;box-shadow:inset 0 0 0 1px #fff"></div>
<svg style="left:424px;top:801px" width="7" height="8" viewBox="0 0 7 8"><path d="M.5 0v8M2.5 0v8M4.5 0v8M6.5 0v8" stroke="#505050" stroke-width="1"/></svg>
<div class="a" style="left:759px;top:797px;width:17px;height:16px;background:linear-gradient(#f2f2f2,#dcdcdc);border:1px solid #8a8a8a;box-shadow:inset 0 0 0 1px #fff"></div>
<svg style="left:764px;top:800px" width="7" height="10" viewBox="0 0 7 10"><path d="M1 1L5 5L1 9" fill="none" stroke="#505050" stroke-width="2"/></svg>
<div class="a" style="left:777px;top:796px;width:280px;height:17px;background:#e6e6e6"></div>
<div class="a" style="left:781px;top:796px;width:156px;height:17px;background:#fff;border:1px solid #8a8a8a;border-bottom:none"></div>
<div class="a" style="left:920px;top:797px;width:16px;height:16px;background:linear-gradient(#f0f0f0,#d8d8d8);border-left:1px solid #a0a0a0"></div>
<svg style="left:924px;top:803px" width="9" height="5" viewBox="0 0 9 5"><path d="M0 0h9L4.5 5z" fill="#000"/></svg>
<div class="t" style="left:784px;top:798px;font-size:12px">100%</div>
<svg style="left:955px;top:799px" width="68" height="15" viewBox="0 0 68 15"><path d="M0 5h66" stroke="#6a6a6a" stroke-width="1"/><path d="M0.5 10v4 M11.5 10v4 M22.5 10v4 M33.5 10v4 M44.5 10v4 M55.5 10v4 M66.5 10v4" stroke="#222" stroke-width="1"/><path d="M29 1h8v6l-4 4-4-4z" fill="#e8e8e8" stroke="#7a7a7a" stroke-width="1"/></svg>
<svg style="left:1041px;top:797px" width="15" height="15" viewBox="0 0 15 15"><rect x="3.5" y="1.5" width="10" height="12" fill="#7aa0f0" stroke="#0a1a70" stroke-width="1.2"/><rect x="0.8" y="4" width="7" height="6" fill="#4070e0" stroke="#2040b0" stroke-width=".8"/></svg>
<div class="a" style="left:1057px;top:99px;width:15px;height:2px;background:#ececec"></div>
<div class="a" style="left:1057px;top:101px;width:1px;height:712px;background:#7a7a7a"></div>
<div class="a" style="left:1057px;top:101px;width:8px;height:1px;background:#7a7a7a"></div>
<div class="a" style="left:1058px;top:102px;width:1px;height:711px;background:#fafafa"></div>
<div class="a" style="left:1059px;top:102px;width:6px;height:711px;background:#d8d8d8"></div>
<div class="a" style="left:1058px;top:428px;width:7px;height:25px;background:linear-gradient(#a8a8a8,#e8e8e8);border-top:1px solid #8a8a8a;border-bottom:1px solid #8a8a8a"></div>
<svg style="left:1059px;top:436px" width="5" height="8" viewBox="0 0 5 8"><path d="M4 0v8L0 4z" fill="#000"/></svg>
<div class="a" style="left:1058px;top:462px;width:7px;height:24px;background:linear-gradient(#a8a8a8,#e8e8e8);border-top:1px solid #8a8a8a;border-bottom:1px solid #8a8a8a"></div>
<svg style="left:1060px;top:470px" width="5" height="8" viewBox="0 0 5 8"><path d="M0 0v8L4 4z" fill="#000"/></svg>
<div class="a" style="left:1065px;top:99px;width:407px;height:714px;background:#ebebeb"></div>
<div class="a" style="left:1065px;top:101px;width:407px;height:24px;background:#cacaca"></div>
<div class="a" style="left:1065px;top:125px;width:407px;height:1px;background:#7a7a7a"></div>
<div class="a" style="left:1071px;top:104px;width:95px;height:22px;background:linear-gradient(#fafafa,#e9e9e9);border:1px solid #7a7a7a;border-bottom:none"></div>
<div class="t" style="left:1083px;top:106px;font-size:15px;line-height:17px;font-weight:bold">设备概览</div>
<div class="a" style="left:1065px;top:126px;width:407px;height:8px;background:#e9e9e9"></div>
<div class="a" style="left:1065px;top:134px;width:407px;height:19px;background:linear-gradient(#f6f6f6 0%,#eceef2 45%,#d8dce4 100%);border-top:1px solid #9a9a9a;border-bottom:1px solid #9a9a9a"></div>
<div class="a" style="left:1089px;top:135px;width:1px;height:17px;background:#a8a8a8"></div>
<div class="a" style="left:1108px;top:135px;width:1px;height:17px;background:#a8a8a8"></div>
<div class="a" style="left:1128px;top:135px;width:1px;height:17px;background:#a8a8a8"></div>
<div class="a" style="left:1313px;top:135px;width:1px;height:17px;background:#a8a8a8"></div>
<div class="a" style="left:1363px;top:135px;width:1px;height:17px;background:#a8a8a8"></div>
<div class="a" style="left:1413px;top:135px;width:1px;height:17px;background:#a8a8a8"></div>
<div class="a" style="left:1454px;top:135px;width:1px;height:17px;background:#a8a8a8"></div>
<svg style="left:1090px;top:136px" width="18" height="16" viewBox="0 0 18 16"><path transform="translate(6.5,0)" d="M0.3 1.5 Q0 5.5 3 6.8 L3 15 L6.6 15 L6.6 6.8 Q9.6 5.5 9.3 1.5 L9.3 0.5 L7.3 0.5 L7 3 L2.6 3 L2.3 0.5 L0.3 0.5z" fill="#28b020"/><path transform="translate(3.5,0)" d="M0.3 1.5 Q0 5.5 3 6.8 L3 15 L6.6 15 L6.6 6.8 Q9.6 5.5 9.3 1.5 L9.3 0.5 L7.3 0.5 L7 3 L2.6 3 L2.3 0.5 L0.3 0.5z" fill="#f8e800"/><path transform="translate(0.5,0)" d="M0.3 1.5 Q0 5.5 3 6.8 L3 15 L6.6 15 L6.6 6.8 Q9.6 5.5 9.3 1.5 L9.3 0.5 L7.3 0.5 L7 3 L2.6 3 L2.3 0.5 L0.3 0.5z" fill="#e00a0a"/></svg>
<div class="t" style="left:1112px;top:137px;font-size:11px;color:#222">...</div>
<div class="t" style="left:1133px;top:136px">模块</div>
<div class="t" style="left:1318px;top:136px">机架</div>
<div class="t" style="left:1367px;top:136px">插槽</div>
<div class="a" style="left:1418px;top:140px;width:1px;height:8px;background:#7a2a9a"></div>
<div class="t" style="left:1424px;top:136px">地址</div>
<div class="a" style="left:1065px;top:153px;width:24px;height:19px;background:#cbcbcb;border-right:1px solid #b8b8b8"></div>
<div class="a" style="left:1090px;top:153px;width:18px;height:19px;background:#dfdfdf"></div>
<div class="a" style="left:1109px;top:153px;width:19px;height:19px;background:#dfdfdf"></div>
<div class="a" style="left:1129px;top:153px;width:184px;height:19px;background:#efefef"></div>
<div class="a" style="left:1314px;top:153px;width:49px;height:19px;background:#dfdfdf"></div>
<div class="a" style="left:1364px;top:153px;width:49px;height:19px;background:#dfdfdf"></div>
<div class="a" style="left:1414px;top:153px;width:40px;height:19px;background:#dfdfdf"></div>
<div class="a" style="left:1065px;top:172px;width:389px;height:1px;background:#fdfdfd"></div>
<svg style="left:1134px;top:160px" width="9" height="5" viewBox="0 0 9 5"><path d="M0 0h9L4.5 5z" fill="#000"/></svg>
<div class="t" style="left:1152px;top:156px;font-size:11px;letter-spacing:-0.6px">LUC-PN</div>
<div class="t" style="left:1318px;top:156px">0</div><div class="t" style="left:1368px;top:156px">0</div>
<div class="a" style="left:1065px;top:173px;width:24px;height:18px;background:#cbcbcb;border-right:1px solid #b8b8b8"></div>
<div class="a" style="left:1090px;top:173px;width:18px;height:18px;background:#dfdfdf"></div>
<div class="a" style="left:1109px;top:173px;width:19px;height:18px;background:#dfdfdf"></div>
<div class="a" style="left:1129px;top:173px;width:184px;height:18px;background:#efefef"></div>
<div class="a" style="left:1314px;top:173px;width:49px;height:18px;background:#dfdfdf"></div>
<div class="a" style="left:1364px;top:173px;width:49px;height:18px;background:#dfdfdf"></div>
<div class="a" style="left:1414px;top:173px;width:40px;height:18px;background:#dfdfdf"></div>
<div class="a" style="left:1065px;top:191px;width:389px;height:1px;background:#fdfdfd"></div>
<svg style="left:1155px;top:178px" width="5" height="9" viewBox="0 0 5 9"><path d="M0 0v9L5 4.5z" fill="#000"/></svg>
<div class="t" style="left:1169px;top:175px">网络接口</div>
<div class="t" style="left:1318px;top:175px">0</div><div class="t" style="left:1368px;top:175px;letter-spacing:-0.5px">0 X1</div>
<div class="a" style="left:1065px;top:192px;width:24px;height:18px;background:#c4cad2;border-right:1px solid #b8b8b8"></div>
<div class="a" style="left:1090px;top:192px;width:18px;height:18px;background:#b4c2da"></div>
<div class="a" style="left:1109px;top:192px;width:19px;height:18px;background:#b4c2da"></div>
<div class="a" style="left:1129px;top:192px;width:184px;height:18px;background:#ffffff"></div>
<div class="a" style="left:1314px;top:192px;width:49px;height:18px;background:#b4c2da"></div>
<div class="a" style="left:1364px;top:192px;width:49px;height:18px;background:#b4c2da"></div>
<div class="a" style="left:1414px;top:192px;width:40px;height:18px;background:#b4c2da"></div>
<div class="a" style="left:1065px;top:210px;width:389px;height:1px;background:#fdfdfd"></div>
<div class="t" style="left:1152px;top:194px;font-size:11px;letter-spacing:0px">ES04DMA_1</div>
<div class="a" style="left:1065px;top:211px;width:24px;height:18px;background:#cbcbcb;border-right:1px solid #b8b8b8"></div>
<div class="a" style="left:1090px;top:211px;width:18px;height:18px;background:#dfdfdf"></div>
<div class="a" style="left:1109px;top:211px;width:19px;height:18px;background:#dfdfdf"></div>
<div class="a" style="left:1129px;top:211px;width:184px;height:18px;background:#e0e0e0"></div>
<div class="a" style="left:1314px;top:211px;width:49px;height:18px;background:#dfdfdf"></div>
<div class="a" style="left:1364px;top:211px;width:49px;height:18px;background:#dfdfdf"></div>
<div class="a" style="left:1414px;top:211px;width:40px;height:18px;background:#dfdfdf"></div>
<div class="a" style="left:1065px;top:229px;width:389px;height:1px;background:#fdfdfd"></div>
<div class="t" style="left:1318px;top:213px">0</div><div class="t" style="left:1368px;top:213px">2</div>
<div class="a" style="left:1065px;top:230px;width:24px;height:18px;background:#cbcbcb;border-right:1px solid #b8b8b8"></div>
<div class="a" style="left:1090px;top:230px;width:18px;height:18px;background:#dfdfdf"></div>
<div class="a" style="left:1109px;top:230px;width:19px;height:18px;background:#dfdfdf"></div>
<div class="a" style="left:1129px;top:230px;width:184px;height:18px;background:#e0e0e0"></div>
<div class="a" style="left:1314px;top:230px;width:49px;height:18px;background:#dfdfdf"></div>
<div class="a" style="left:1364px;top:230px;width:49px;height:18px;background:#dfdfdf"></div>
<div class="a" style="left:1414px;top:230px;width:40px;height:18px;background:#dfdfdf"></div>
<div class="a" style="left:1065px;top:248px;width:389px;height:1px;background:#fdfdfd"></div>
<div class="t" style="left:1318px;top:232px">0</div><div class="t" style="left:1368px;top:232px">3</div>
<div class="a" style="left:1065px;top:249px;width:24px;height:18px;background:#cbcbcb;border-right:1px solid #b8b8b8"></div>
<div class="a" style="left:1090px;top:249px;width:18px;height:18px;background:#dfdfdf"></div>
<div class="a" style="left:1109px;top:249px;width:19px;height:18px;background:#dfdfdf"></div>
<div class="a" style="left:1129px;top:249px;width:184px;height:18px;background:#e0e0e0"></div>
<div class="a" style="left:1314px;top:249px;width:49px;height:18px;background:#dfdfdf"></div>
<div class="a" style="left:1364px;top:249px;width:49px;height:18px;background:#dfdfdf"></div>
<div class="a" style="left:1414px;top:249px;width:40px;height:18px;background:#dfdfdf"></div>
<div class="a" style="left:1065px;top:267px;width:389px;height:1px;background:#fdfdfd"></div>
<div class="t" style="left:1318px;top:251px">0</div><div class="t" style="left:1368px;top:251px">4</div>
<div class="a" style="left:1065px;top:268px;width:24px;height:18px;background:#cbcbcb;border-right:1px solid #b8b8b8"></div>
<div class="a" style="left:1090px;top:268px;width:18px;height:18px;background:#dfdfdf"></div>
<div class="a" style="left:1109px;top:268px;width:19px;height:18px;background:#dfdfdf"></div>
<div class="a" style="left:1129px;top:268px;width:184px;height:18px;background:#e0e0e0"></div>
<div class="a" style="left:1314px;top:268px;width:49px;height:18px;background:#dfdfdf"></div>
<div class="a" style="left:1364px;top:268px;width:49px;height:18px;background:#dfdfdf"></div>
<div class="a" style="left:1414px;top:268px;width:40px;height:18px;background:#dfdfdf"></div>
<div class="a" style="left:1065px;top:286px;width:389px;height:1px;background:#fdfdfd"></div>
<div class="t" style="left:1318px;top:270px">0</div><div class="t" style="left:1368px;top:270px">5</div>
<div class="a" style="left:1065px;top:287px;width:24px;height:18px;background:#cbcbcb;border-right:1px solid #b8b8b8"></div>
<div class="a" style="left:1090px;top:287px;width:18px;height:18px;background:#dfdfdf"></div>
<div class="a" style="left:1109px;top:287px;width:19px;height:18px;background:#dfdfdf"></div>
<div class="a" style="left:1129px;top:287px;width:184px;height:18px;background:#e0e0e0"></div>
<div class="a" style="left:1314px;top:287px;width:49px;height:18px;background:#dfdfdf"></div>
<div class="a" style="left:1364px;top:287px;width:49px;height:18px;background:#dfdfdf"></div>
<div class="a" style="left:1414px;top:287px;width:40px;height:18px;background:#dfdfdf"></div>
<div class="a" style="left:1065px;top:305px;width:389px;height:1px;background:#fdfdfd"></div>
<div class="t" style="left:1318px;top:289px">0</div><div class="t" style="left:1368px;top:289px">6</div>
<div class="a" style="left:1065px;top:306px;width:24px;height:18px;background:#cbcbcb;border-right:1px solid #b8b8b8"></div>
<div class="a" style="left:1090px;top:306px;width:18px;height:18px;background:#dfdfdf"></div>
<div class="a" style="left:1109px;top:306px;width:19px;height:18px;background:#dfdfdf"></div>
<div class="a" style="left:1129px;top:306px;width:184px;height:18px;background:#e0e0e0"></div>
<div class="a" style="left:1314px;top:306px;width:49px;height:18px;background:#dfdfdf"></div>
<div class="a" style="left:1364px;top:306px;width:49px;height:18px;background:#dfdfdf"></div>
<div class="a" style="left:1414px;top:306px;width:40px;height:18px;background:#dfdfdf"></div>
<div class="a" style="left:1065px;top:324px;width:389px;height:1px;background:#fdfdfd"></div>
<div class="t" style="left:1318px;top:308px">0</div><div class="t" style="left:1368px;top:308px">7</div>
<div class="a" style="left:1065px;top:325px;width:24px;height:18px;background:#cbcbcb;border-right:1px solid #b8b8b8"></div>
<div class="a" style="left:1090px;top:325px;width:18px;height:18px;background:#dfdfdf"></div>
<div class="a" style="left:1109px;top:325px;width:19px;height:18px;background:#dfdfdf"></div>
<div class="a" style="left:1129px;top:325px;width:184px;height:18px;background:#e0e0e0"></div>
<div class="a" style="left:1314px;top:325px;width:49px;height:18px;background:#dfdfdf"></div>
<div class="a" style="left:1364px;top:325px;width:49px;height:18px;background:#dfdfdf"></div>
<div class="a" style="left:1414px;top:325px;width:40px;height:18px;background:#dfdfdf"></div>
<div class="a" style="left:1065px;top:343px;width:389px;height:1px;background:#fdfdfd"></div>
<div class="t" style="left:1318px;top:327px">0</div><div class="t" style="left:1368px;top:327px">8</div>
<div class="a" style="left:1065px;top:344px;width:24px;height:18px;background:#cbcbcb;border-right:1px solid #b8b8b8"></div>
<div class="a" style="left:1090px;top:344px;width:18px;height:18px;background:#dfdfdf"></div>
<div class="a" style="left:1109px;top:344px;width:19px;height:18px;background:#dfdfdf"></div>
<div class="a" style="left:1129px;top:344px;width:184px;height:18px;background:#e0e0e0"></div>
<div class="a" style="left:1314px;top:344px;width:49px;height:18px;background:#dfdfdf"></div>
<div class="a" style="left:1364px;top:344px;width:49px;height:18px;background:#dfdfdf"></div>
<div class="a" style="left:1414px;top:344px;width:40px;height:18px;background:#dfdfdf"></div>
<div class="a" style="left:1065px;top:362px;width:389px;height:1px;background:#fdfdfd"></div>
<div class="t" style="left:1318px;top:346px">0</div><div class="t" style="left:1368px;top:346px">9</div>
<div class="a" style="left:1065px;top:363px;width:24px;height:18px;background:#cbcbcb;border-right:1px solid #b8b8b8"></div>
<div class="a" style="left:1090px;top:363px;width:18px;height:18px;background:#dfdfdf"></div>
<div class="a" style="left:1109px;top:363px;width:19px;height:18px;background:#dfdfdf"></div>
<div class="a" style="left:1129px;top:363px;width:184px;height:18px;background:#e0e0e0"></div>
<div class="a" style="left:1314px;top:363px;width:49px;height:18px;background:#dfdfdf"></div>
<div class="a" style="left:1364px;top:363px;width:49px;height:18px;background:#dfdfdf"></div>
<div class="a" style="left:1414px;top:363px;width:40px;height:18px;background:#dfdfdf"></div>
<div class="a" style="left:1065px;top:381px;width:389px;height:1px;background:#fdfdfd"></div>
<div class="t" style="left:1318px;top:365px">0</div><div class="t" style="left:1368px;top:365px">10</div>
<div class="a" style="left:1065px;top:382px;width:24px;height:18px;background:#cbcbcb;border-right:1px solid #b8b8b8"></div>
<div class="a" style="left:1090px;top:382px;width:18px;height:18px;background:#dfdfdf"></div>
<div class="a" style="left:1109px;top:382px;width:19px;height:18px;background:#dfdfdf"></div>
<div class="a" style="left:1129px;top:382px;width:184px;height:18px;background:#e0e0e0"></div>
<div class="a" style="left:1314px;top:382px;width:49px;height:18px;background:#dfdfdf"></div>
<div class="a" style="left:1364px;top:382px;width:49px;height:18px;background:#dfdfdf"></div>
<div class="a" style="left:1414px;top:382px;width:40px;height:18px;background:#dfdfdf"></div>
<div class="a" style="left:1065px;top:400px;width:389px;height:1px;background:#fdfdfd"></div>
<div class="t" style="left:1318px;top:384px">0</div><div class="t" style="left:1368px;top:384px">11</div>
<div class="a" style="left:1065px;top:401px;width:24px;height:18px;background:#cbcbcb;border-right:1px solid #b8b8b8"></div>
<div class="a" style="left:1090px;top:401px;width:18px;height:18px;background:#dfdfdf"></div>
<div class="a" style="left:1109px;top:401px;width:19px;height:18px;background:#dfdfdf"></div>
<div class="a" style="left:1129px;top:401px;width:184px;height:18px;background:#e0e0e0"></div>
<div class="a" style="left:1314px;top:401px;width:49px;height:18px;background:#dfdfdf"></div>
<div class="a" style="left:1364px;top:401px;width:49px;height:18px;background:#dfdfdf"></div>
<div class="a" style="left:1414px;top:401px;width:40px;height:18px;background:#dfdfdf"></div>
<div class="a" style="left:1065px;top:419px;width:389px;height:1px;background:#fdfdfd"></div>
<div class="t" style="left:1318px;top:403px">0</div><div class="t" style="left:1368px;top:403px">12</div>
<div class="a" style="left:1065px;top:420px;width:24px;height:18px;background:#cbcbcb;border-right:1px solid #b8b8b8"></div>
<div class="a" style="left:1090px;top:420px;width:18px;height:18px;background:#dfdfdf"></div>
<div class="a" style="left:1109px;top:420px;width:19px;height:18px;background:#dfdfdf"></div>
<div class="a" style="left:1129px;top:420px;width:184px;height:18px;background:#e0e0e0"></div>
<div class="a" style="left:1314px;top:420px;width:49px;height:18px;background:#dfdfdf"></div>
<div class="a" style="left:1364px;top:420px;width:49px;height:18px;background:#dfdfdf"></div>
<div class="a" style="left:1414px;top:420px;width:40px;height:18px;background:#dfdfdf"></div>
<div class="a" style="left:1065px;top:438px;width:389px;height:1px;background:#fdfdfd"></div>
<div class="t" style="left:1318px;top:422px">0</div><div class="t" style="left:1368px;top:422px">13</div>
<div class="a" style="left:1065px;top:439px;width:24px;height:18px;background:#cbcbcb;border-right:1px solid #b8b8b8"></div>
<div class="a" style="left:1090px;top:439px;width:18px;height:18px;background:#dfdfdf"></div>
<div class="a" style="left:1109px;top:439px;width:19px;height:18px;background:#dfdfdf"></div>
<div class="a" style="left:1129px;top:439px;width:184px;height:18px;background:#e0e0e0"></div>
<div class="a" style="left:1314px;top:439px;width:49px;height:18px;background:#dfdfdf"></div>
<div class="a" style="left:1364px;top:439px;width:49px;height:18px;background:#dfdfdf"></div>
<div class="a" style="left:1414px;top:439px;width:40px;height:18px;background:#dfdfdf"></div>
<div class="a" style="left:1065px;top:457px;width:389px;height:1px;background:#fdfdfd"></div>
<div class="t" style="left:1318px;top:441px">0</div><div class="t" style="left:1368px;top:441px">14</div>
<div class="a" style="left:1065px;top:458px;width:24px;height:18px;background:#cbcbcb;border-right:1px solid #b8b8b8"></div>
<div class="a" style="left:1090px;top:458px;width:18px;height:18px;background:#dfdfdf"></div>
<div class="a" style="left:1109px;top:458px;width:19px;height:18px;background:#dfdfdf"></div>
<div class="a" style="left:1129px;top:458px;width:184px;height:18px;background:#e0e0e0"></div>
<div class="a" style="left:1314px;top:458px;width:49px;height:18px;background:#dfdfdf"></div>
<div class="a" style="left:1364px;top:458px;width:49px;height:18px;background:#dfdfdf"></div>
<div class="a" style="left:1414px;top:458px;width:40px;height:18px;background:#dfdfdf"></div>
<div class="a" style="left:1065px;top:476px;width:389px;height:1px;background:#fdfdfd"></div>
<div class="t" style="left:1318px;top:460px">0</div><div class="t" style="left:1368px;top:460px">15</div>
<div class="a" style="left:1065px;top:477px;width:24px;height:18px;background:#cbcbcb;border-right:1px solid #b8b8b8"></div>
<div class="a" style="left:1090px;top:477px;width:18px;height:18px;background:#dfdfdf"></div>
<div class="a" style="left:1109px;top:477px;width:19px;height:18px;background:#dfdfdf"></div>
<div class="a" style="left:1129px;top:477px;width:184px;height:18px;background:#e0e0e0"></div>
<div class="a" style="left:1314px;top:477px;width:49px;height:18px;background:#dfdfdf"></div>
<div class="a" style="left:1364px;top:477px;width:49px;height:18px;background:#dfdfdf"></div>
<div class="a" style="left:1414px;top:477px;width:40px;height:18px;background:#dfdfdf"></div>
<div class="a" style="left:1065px;top:495px;width:389px;height:1px;background:#fdfdfd"></div>
<div class="t" style="left:1318px;top:479px">0</div><div class="t" style="left:1368px;top:479px">16</div>
<div class="a" style="left:1065px;top:496px;width:24px;height:18px;background:#cbcbcb;border-right:1px solid #b8b8b8"></div>
<div class="a" style="left:1090px;top:496px;width:18px;height:18px;background:#dfdfdf"></div>
<div class="a" style="left:1109px;top:496px;width:19px;height:18px;background:#dfdfdf"></div>
<div class="a" style="left:1129px;top:496px;width:184px;height:18px;background:#e0e0e0"></div>
<div class="a" style="left:1314px;top:496px;width:49px;height:18px;background:#dfdfdf"></div>
<div class="a" style="left:1364px;top:496px;width:49px;height:18px;background:#dfdfdf"></div>
<div class="a" style="left:1414px;top:496px;width:40px;height:18px;background:#dfdfdf"></div>
<div class="a" style="left:1065px;top:514px;width:389px;height:1px;background:#fdfdfd"></div>
<div class="t" style="left:1318px;top:498px">0</div><div class="t" style="left:1368px;top:498px">17</div>
<div class="a" style="left:1065px;top:515px;width:24px;height:18px;background:#cbcbcb;border-right:1px solid #b8b8b8"></div>
<div class="a" style="left:1090px;top:515px;width:18px;height:18px;background:#dfdfdf"></div>
<div class="a" style="left:1109px;top:515px;width:19px;height:18px;background:#dfdfdf"></div>
<div class="a" style="left:1129px;top:515px;width:184px;height:18px;background:#e0e0e0"></div>
<div class="a" style="left:1314px;top:515px;width:49px;height:18px;background:#dfdfdf"></div>
<div class="a" style="left:1364px;top:515px;width:49px;height:18px;background:#dfdfdf"></div>
<div class="a" style="left:1414px;top:515px;width:40px;height:18px;background:#dfdfdf"></div>
<div class="a" style="left:1065px;top:533px;width:389px;height:1px;background:#fdfdfd"></div>
<div class="t" style="left:1318px;top:517px">0</div><div class="t" style="left:1368px;top:517px">18</div>
<div class="a" style="left:1065px;top:534px;width:24px;height:18px;background:#cbcbcb;border-right:1px solid #b8b8b8"></div>
<div class="a" style="left:1090px;top:534px;width:18px;height:18px;background:#dfdfdf"></div>
<div class="a" style="left:1109px;top:534px;width:19px;height:18px;background:#dfdfdf"></div>
<div class="a" style="left:1129px;top:534px;width:184px;height:18px;background:#e0e0e0"></div>
<div class="a" style="left:1314px;top:534px;width:49px;height:18px;background:#dfdfdf"></div>
<div class="a" style="left:1364px;top:534px;width:49px;height:18px;background:#dfdfdf"></div>
<div class="a" style="left:1414px;top:534px;width:40px;height:18px;background:#dfdfdf"></div>
<div class="a" style="left:1065px;top:552px;width:389px;height:1px;background:#fdfdfd"></div>
<div class="t" style="left:1318px;top:536px">0</div><div class="t" style="left:1368px;top:536px">19</div>
<div class="a" style="left:1065px;top:553px;width:24px;height:18px;background:#cbcbcb;border-right:1px solid #b8b8b8"></div>
<div class="a" style="left:1090px;top:553px;width:18px;height:18px;background:#dfdfdf"></div>
<div class="a" style="left:1109px;top:553px;width:19px;height:18px;background:#dfdfdf"></div>
<div class="a" style="left:1129px;top:553px;width:184px;height:18px;background:#e0e0e0"></div>
<div class="a" style="left:1314px;top:553px;width:49px;height:18px;background:#dfdfdf"></div>
<div class="a" style="left:1364px;top:553px;width:49px;height:18px;background:#dfdfdf"></div>
<div class="a" style="left:1414px;top:553px;width:40px;height:18px;background:#dfdfdf"></div>
<div class="a" style="left:1065px;top:571px;width:389px;height:1px;background:#fdfdfd"></div>
<div class="t" style="left:1318px;top:555px">0</div><div class="t" style="left:1368px;top:555px">20</div>
<div class="a" style="left:1065px;top:572px;width:24px;height:18px;background:#cbcbcb;border-right:1px solid #b8b8b8"></div>
<div class="a" style="left:1090px;top:572px;width:18px;height:18px;background:#dfdfdf"></div>
<div class="a" style="left:1109px;top:572px;width:19px;height:18px;background:#dfdfdf"></div>
<div class="a" style="left:1129px;top:572px;width:184px;height:18px;background:#e0e0e0"></div>
<div class="a" style="left:1314px;top:572px;width:49px;height:18px;background:#dfdfdf"></div>
<div class="a" style="left:1364px;top:572px;width:49px;height:18px;background:#dfdfdf"></div>
<div class="a" style="left:1414px;top:572px;width:40px;height:18px;background:#dfdfdf"></div>
<div class="a" style="left:1065px;top:590px;width:389px;height:1px;background:#fdfdfd"></div>
<div class="t" style="left:1318px;top:574px">0</div><div class="t" style="left:1368px;top:574px">21</div>
<div class="a" style="left:1065px;top:591px;width:24px;height:18px;background:#cbcbcb;border-right:1px solid #b8b8b8"></div>
<div class="a" style="left:1090px;top:591px;width:18px;height:18px;background:#dfdfdf"></div>
<div class="a" style="left:1109px;top:591px;width:19px;height:18px;background:#dfdfdf"></div>
<div class="a" style="left:1129px;top:591px;width:184px;height:18px;background:#e0e0e0"></div>
<div class="a" style="left:1314px;top:591px;width:49px;height:18px;background:#dfdfdf"></div>
<div class="a" style="left:1364px;top:591px;width:49px;height:18px;background:#dfdfdf"></div>
<div class="a" style="left:1414px;top:591px;width:40px;height:18px;background:#dfdfdf"></div>
<div class="a" style="left:1065px;top:609px;width:389px;height:1px;background:#fdfdfd"></div>
<div class="t" style="left:1318px;top:593px">0</div><div class="t" style="left:1368px;top:593px">22</div>
<div class="a" style="left:1065px;top:610px;width:24px;height:18px;background:#cbcbcb;border-right:1px solid #b8b8b8"></div>
<div class="a" style="left:1090px;top:610px;width:18px;height:18px;background:#dfdfdf"></div>
<div class="a" style="left:1109px;top:610px;width:19px;height:18px;background:#dfdfdf"></div>
<div class="a" style="left:1129px;top:610px;width:184px;height:18px;background:#e0e0e0"></div>
<div class="a" style="left:1314px;top:610px;width:49px;height:18px;background:#dfdfdf"></div>
<div class="a" style="left:1364px;top:610px;width:49px;height:18px;background:#dfdfdf"></div>
<div class="a" style="left:1414px;top:610px;width:40px;height:18px;background:#dfdfdf"></div>
<div class="a" style="left:1065px;top:628px;width:389px;height:1px;background:#fdfdfd"></div>
<div class="t" style="left:1318px;top:612px">0</div><div class="t" style="left:1368px;top:612px">23</div>
<div class="a" style="left:1065px;top:629px;width:24px;height:18px;background:#cbcbcb;border-right:1px solid #b8b8b8"></div>
<div class="a" style="left:1090px;top:629px;width:18px;height:18px;background:#dfdfdf"></div>
<div class="a" style="left:1109px;top:629px;width:19px;height:18px;background:#dfdfdf"></div>
<div class="a" style="left:1129px;top:629px;width:184px;height:18px;background:#e0e0e0"></div>
<div class="a" style="left:1314px;top:629px;width:49px;height:18px;background:#dfdfdf"></div>
<div class="a" style="left:1364px;top:629px;width:49px;height:18px;background:#dfdfdf"></div>
<div class="a" style="left:1414px;top:629px;width:40px;height:18px;background:#dfdfdf"></div>
<div class="a" style="left:1065px;top:647px;width:389px;height:1px;background:#fdfdfd"></div>
<div class="t" style="left:1318px;top:631px">0</div><div class="t" style="left:1368px;top:631px">24</div>
<div class="a" style="left:1065px;top:648px;width:24px;height:18px;background:#cbcbcb;border-right:1px solid #b8b8b8"></div>
<div class="a" style="left:1090px;top:648px;width:18px;height:18px;background:#dfdfdf"></div>
<div class="a" style="left:1109px;top:648px;width:19px;height:18px;background:#dfdfdf"></div>
<div class="a" style="left:1129px;top:648px;width:184px;height:18px;background:#e0e0e0"></div>
<div class="a" style="left:1314px;top:648px;width:49px;height:18px;background:#dfdfdf"></div>
<div class="a" style="left:1364px;top:648px;width:49px;height:18px;background:#dfdfdf"></div>
<div class="a" style="left:1414px;top:648px;width:40px;height:18px;background:#dfdfdf"></div>
<div class="a" style="left:1065px;top:666px;width:389px;height:1px;background:#fdfdfd"></div>
<div class="t" style="left:1318px;top:650px">0</div><div class="t" style="left:1368px;top:650px">25</div>
<div class="a" style="left:1065px;top:667px;width:24px;height:18px;background:#cbcbcb;border-right:1px solid #b8b8b8"></div>
<div class="a" style="left:1090px;top:667px;width:18px;height:18px;background:#dfdfdf"></div>
<div class="a" style="left:1109px;top:667px;width:19px;height:18px;background:#dfdfdf"></div>
<div class="a" style="left:1129px;top:667px;width:184px;height:18px;background:#e0e0e0"></div>
<div class="a" style="left:1314px;top:667px;width:49px;height:18px;background:#dfdfdf"></div>
<div class="a" style="left:1364px;top:667px;width:49px;height:18px;background:#dfdfdf"></div>
<div class="a" style="left:1414px;top:667px;width:40px;height:18px;background:#dfdfdf"></div>
<div class="a" style="left:1065px;top:685px;width:389px;height:1px;background:#fdfdfd"></div>
<div class="t" style="left:1318px;top:669px">0</div><div class="t" style="left:1368px;top:669px">26</div>
<div class="a" style="left:1065px;top:686px;width:24px;height:18px;background:#cbcbcb;border-right:1px solid #b8b8b8"></div>
<div class="a" style="left:1090px;top:686px;width:18px;height:18px;background:#dfdfdf"></div>
<div class="a" style="left:1109px;top:686px;width:19px;height:18px;background:#dfdfdf"></div>
<div class="a" style="left:1129px;top:686px;width:184px;height:18px;background:#e0e0e0"></div>
<div class="a" style="left:1314px;top:686px;width:49px;height:18px;background:#dfdfdf"></div>
<div class="a" style="left:1364px;top:686px;width:49px;height:18px;background:#dfdfdf"></div>
<div class="a" style="left:1414px;top:686px;width:40px;height:18px;background:#dfdfdf"></div>
<div class="a" style="left:1065px;top:704px;width:389px;height:1px;background:#fdfdfd"></div>
<div class="t" style="left:1318px;top:688px">0</div><div class="t" style="left:1368px;top:688px">27</div>
<div class="a" style="left:1065px;top:705px;width:24px;height:18px;background:#cbcbcb;border-right:1px solid #b8b8b8"></div>
<div class="a" style="left:1090px;top:705px;width:18px;height:18px;background:#dfdfdf"></div>
<div class="a" style="left:1109px;top:705px;width:19px;height:18px;background:#dfdfdf"></div>
<div class="a" style="left:1129px;top:705px;width:184px;height:18px;background:#e0e0e0"></div>
<div class="a" style="left:1314px;top:705px;width:49px;height:18px;background:#dfdfdf"></div>
<div class="a" style="left:1364px;top:705px;width:49px;height:18px;background:#dfdfdf"></div>
<div class="a" style="left:1414px;top:705px;width:40px;height:18px;background:#dfdfdf"></div>
<div class="a" style="left:1065px;top:723px;width:389px;height:1px;background:#fdfdfd"></div>
<div class="t" style="left:1318px;top:707px">0</div><div class="t" style="left:1368px;top:707px">28</div>
<div class="a" style="left:1065px;top:724px;width:24px;height:18px;background:#cbcbcb;border-right:1px solid #b8b8b8"></div>
<div class="a" style="left:1090px;top:724px;width:18px;height:18px;background:#dfdfdf"></div>
<div class="a" style="left:1109px;top:724px;width:19px;height:18px;background:#dfdfdf"></div>
<div class="a" style="left:1129px;top:724px;width:184px;height:18px;background:#e0e0e0"></div>
<div class="a" style="left:1314px;top:724px;width:49px;height:18px;background:#dfdfdf"></div>
<div class="a" style="left:1364px;top:724px;width:49px;height:18px;background:#dfdfdf"></div>
<div class="a" style="left:1414px;top:724px;width:40px;height:18px;background:#dfdfdf"></div>
<div class="a" style="left:1065px;top:742px;width:389px;height:1px;background:#fdfdfd"></div>
<div class="t" style="left:1318px;top:726px">0</div><div class="t" style="left:1368px;top:726px">29</div>
<div class="a" style="left:1065px;top:743px;width:24px;height:18px;background:#cbcbcb;border-right:1px solid #b8b8b8"></div>
<div class="a" style="left:1090px;top:743px;width:18px;height:18px;background:#dfdfdf"></div>
<div class="a" style="left:1109px;top:743px;width:19px;height:18px;background:#dfdfdf"></div>
<div class="a" style="left:1129px;top:743px;width:184px;height:18px;background:#e0e0e0"></div>
<div class="a" style="left:1314px;top:743px;width:49px;height:18px;background:#dfdfdf"></div>
<div class="a" style="left:1364px;top:743px;width:49px;height:18px;background:#dfdfdf"></div>
<div class="a" style="left:1414px;top:743px;width:40px;height:18px;background:#dfdfdf"></div>
<div class="a" style="left:1065px;top:761px;width:389px;height:1px;background:#fdfdfd"></div>
<div class="t" style="left:1318px;top:745px">0</div><div class="t" style="left:1368px;top:745px">30</div>
<div class="a" style="left:1065px;top:762px;width:24px;height:18px;background:#cbcbcb;border-right:1px solid #b8b8b8"></div>
<div class="a" style="left:1090px;top:762px;width:18px;height:18px;background:#dfdfdf"></div>
<div class="a" style="left:1109px;top:762px;width:19px;height:18px;background:#dfdfdf"></div>
<div class="a" style="left:1129px;top:762px;width:184px;height:18px;background:#e0e0e0"></div>
<div class="a" style="left:1314px;top:762px;width:49px;height:18px;background:#dfdfdf"></div>
<div class="a" style="left:1364px;top:762px;width:49px;height:18px;background:#dfdfdf"></div>
<div class="a" style="left:1414px;top:762px;width:40px;height:18px;background:#dfdfdf"></div>
<div class="a" style="left:1065px;top:780px;width:389px;height:1px;background:#fdfdfd"></div>
<div class="t" style="left:1318px;top:764px">0</div><div class="t" style="left:1368px;top:764px">31</div>
<div class="a" style="left:1065px;top:781px;width:24px;height:15px;background:#cbcbcb;border-right:1px solid #b8b8b8"></div>
<div class="a" style="left:1090px;top:781px;width:18px;height:15px;background:#dfdfdf"></div>
<div class="a" style="left:1109px;top:781px;width:19px;height:15px;background:#dfdfdf"></div>
<div class="a" style="left:1129px;top:781px;width:184px;height:15px;background:#e0e0e0"></div>
<div class="a" style="left:1314px;top:781px;width:49px;height:15px;background:#dfdfdf"></div>
<div class="a" style="left:1364px;top:781px;width:49px;height:15px;background:#dfdfdf"></div>
<div class="a" style="left:1414px;top:781px;width:40px;height:15px;background:#dfdfdf"></div>
<div class="t" style="left:1318px;top:783px">0</div><div class="t" style="left:1368px;top:783px">32</div>
<div class="a" style="left:1108px;top:153px;width:1px;height:643px;background:#fcfcfc"></div>
<div class="a" style="left:1128px;top:153px;width:1px;height:643px;background:#fcfcfc"></div>
<div class="a" style="left:1313px;top:153px;width:1px;height:643px;background:#fcfcfc"></div>
<div class="a" style="left:1363px;top:153px;width:1px;height:643px;background:#fcfcfc"></div>
<div class="a" style="left:1413px;top:153px;width:1px;height:643px;background:#fcfcfc"></div>
<div class="a" style="left:1090px;top:191px;width:364px;height:1px;background:#3a6ad8"></div>
<div class="a" style="left:1090px;top:210px;width:364px;height:1px;background:#3a6ad8"></div>
<div class="a" style="left:1454px;top:153px;width:18px;height:643px;background:#c4c4c4"></div>
<div class="a" style="left:1455px;top:155px;width:16px;height:17px;background:linear-gradient(#f2f2f2,#dcdcdc);border:1px solid #8a8a8a;box-shadow:inset 0 0 0 1px #fff"></div>
<svg style="left:1458px;top:160px" width="10" height="7" viewBox="0 0 10 7"><path d="M1 6L5 2L9 6" fill="none" stroke="#505050" stroke-width="2"/></svg>
<div class="a" style="left:1455px;top:173px;width:16px;height:302px;background:linear-gradient(90deg,#ececec,#d6d6d6);border:1px solid #8a8a8a;box-shadow:inset 0 0 0 1px #fff"></div>
<svg style="left:1459px;top:321px" width="9" height="8" viewBox="0 0 9 8"><path d="M0 .5h9M0 2.5h9M0 4.5h9M0 6.5h9" stroke="#606060" stroke-width="1"/></svg>
<div class="a" style="left:1455px;top:778px;width:16px;height:17px;background:linear-gradient(#f2f2f2,#dcdcdc);border:1px solid #8a8a8a;box-shadow:inset 0 0 0 1px #fff"></div>
<svg style="left:1458px;top:783px" width="10" height="7" viewBox="0 0 10 7"><path d="M1 1L5 5L9 1" fill="none" stroke="#505050" stroke-width="2"/></svg>
<div class="a" style="left:1065px;top:796px;width:25px;height:17px;background:#cbcbcb;border-top:1px solid #fcfcfc"></div>
<div class="a" style="left:1090px;top:796px;width:364px;height:17px;background:#c4c4c4"></div>
<div class="a" style="left:1091px;top:797px;width:17px;height:16px;background:linear-gradient(#f2f2f2,#dcdcdc);border:1px solid #8a8a8a;box-shadow:inset 0 0 0 1px #fff"></div>
<svg style="left:1096px;top:800px" width="7" height="10" viewBox="0 0 7 10"><path d="M6 1L2 5L6 9" fill="none" stroke="#505050" stroke-width="2"/></svg>
<div class="a" style="left:1109px;top:797px;width:218px;height:16px;background:linear-gradient(#ececec,#d6d6d6);border:1px solid #8a8a8a;box-shadow:inset 0 0 0 1px #fff"></div>
<svg style="left:1214px;top:801px" width="7" height="8" viewBox="0 0 7 8"><path d="M.5 0v8M2.5 0v8M4.5 0v8M6.5 0v8" stroke="#505050" stroke-width="1"/></svg>
<div class="a" style="left:1437px;top:797px;width:17px;height:16px;background:linear-gradient(#f2f2f2,#dcdcdc);border:1px solid #8a8a8a;box-shadow:inset 0 0 0 1px #fff"></div>
<svg style="left:1442px;top:800px" width="7" height="10" viewBox="0 0 7 10"><path d="M1 1L5 5L1 9" fill="none" stroke="#505050" stroke-width="2"/></svg>
<div class="a" style="left:1454px;top:796px;width:18px;height:17px;background:#d4d4d4"></div>
<div class="a" style="left:1471px;top:99px;width:1px;height:714px;background:#f0f0f0"></div>
<div class="a" style="left:1220px;top:191px;width:26px;height:26px;border-radius:50%;background:#f93b3b"></div>
<svg style="left:1220px;top:191px" width="26" height="26" viewBox="0 0 26 26"><path d="M10.3 9L13.9 6.4V17.2" fill="none" stroke="#fff" stroke-width="1.9"/></svg>
<div class="a" style="left:1281px;top:195px;width:178px;height:476px;background:#fff;border:1px solid #8a8a8a"></div>
<div class="t" style="left:1306px;top:199px;color:#8a8a8a">更改设备</div>
<div class="t" style="left:1306px;top:217px;color:#8a8a8a">启动设备工具...</div>
<div class="a" style="left:1284px;top:237px;width:172px;height:1px;background:#c8c8c8"></div>
<svg style="left:1286px;top:241px" width="16" height="16" viewBox="0 0 16 16"><g stroke="#2a5ac8" stroke-width="1.5" fill="none"><line x1="3" y1="1" x2="10" y2="11"/><line x1="11" y1="1" x2="4" y2="11"/><circle cx="4" cy="13" r="1.8"/><circle cx="10" cy="13" r="1.8"/></g></svg>
<div class="t" style="left:1306px;top:242px;color:#000">剪切(T)</div>
<div class="t" style="left:1349px;top:242px;width:100px;text-align:right;color:#000;letter-spacing:-0.3px">Ctrl+X</div>
<svg style="left:1286px;top:259px" width="16" height="16" viewBox="0 0 16 16"><rect x="0.5" y="1" width="8" height="10" fill="#f4f6ff" stroke="#8898e8"/><g fill="#0a1060"><rect x="2" y="3" width="2.5" height="1"/><rect x="2" y="5" width="2.5" height="1"/><rect x="2" y="7" width="2.5" height="1"/></g><rect x="5.5" y="3.5" width="9" height="11" fill="#f8faff" stroke="#6a7ae0"/><g fill="#0a1060"><rect x="7" y="5.5" width="6" height="1"/><rect x="7" y="7.5" width="6" height="1"/><rect x="7" y="9.5" width="6" height="1"/><rect x="7" y="11.5" width="6" height="1"/></g></svg>
<div class="t" style="left:1306px;top:260px;color:#000">复制(Y)</div>
<div class="t" style="left:1349px;top:260px;width:100px;text-align:right;color:#000;letter-spacing:-0.3px">Ctrl+C</div>
<svg style="left:1286px;top:277px" width="16" height="16" viewBox="0 0 16 16"><rect x="0.5" y="1.5" width="9" height="12" fill="#fff4a0" stroke="#c89830"/><rect x="3" y="0.5" width="4" height="2" fill="#909090"/><rect x="6" y="5" width="8.5" height="10" fill="#f8faff" stroke="#6a7ae0"/><g fill="#0a1060"><rect x="7.5" y="7.5" width="5" height="1"/><rect x="7.5" y="9.5" width="5" height="1"/><rect x="7.5" y="11.5" width="5" height="1"/></g></svg>
<div class="t" style="left:1306px;top:278px;color:#000">粘贴(P)</div>
<div class="t" style="left:1349px;top:278px;width:100px;text-align:right;color:#000;letter-spacing:-0.3px">Ctrl+V</div>
<div class="a" style="left:1284px;top:298px;width:172px;height:1px;background:#c8c8c8"></div>
<svg style="left:1286px;top:302px" width="16" height="16" viewBox="0 0 16 16"><g stroke="#0a0a50" stroke-width="2.2"><line x1="2" y1="3" x2="13" y2="14"/><line x1="13" y1="3" x2="2" y2="14"/></g></svg>
<div class="t" style="left:1306px;top:303px;color:#000">删除(D)</div>
<div class="t" style="left:1349px;top:303px;width:100px;text-align:right;color:#000;letter-spacing:-0.3px">Del</div>
<div class="t" style="left:1306px;top:321px;color:#000">重命名(N)</div>
<div class="t" style="left:1349px;top:321px;width:100px;text-align:right;color:#000;letter-spacing:-0.3px">F2</div>
<div class="a" style="left:1284px;top:341px;width:172px;height:1px;background:#c8c8c8"></div>
<div class="t" style="left:1306px;top:346px;color:#8a8a8a">压缩地址</div>
<div class="t" style="left:1306px;top:364px;color:#8a8a8a">解压缩地址</div>
<div class="a" style="left:1284px;top:384px;width:172px;height:1px;background:#c8c8c8"></div>
<div class="t" style="left:1306px;top:389px;color:#000">编译</div>
<svg style="left:1445px;top:391px" width="5" height="9" viewBox="0 0 5 9"><path d="M0 0v9L5 4.5z" fill="#000"/></svg>
<div class="t" style="left:1306px;top:407px;color:#000">下载到设备(L)</div>
<svg style="left:1445px;top:409px" width="5" height="9" viewBox="0 0 5 9"><path d="M0 0v9L5 4.5z" fill="#000"/></svg>
<svg style="left:1286px;top:424px" width="16" height="16" viewBox="0 0 16 16"><line x1="0.8" y1="15.2" x2="15.2" y2="0.8" stroke="#f06020" stroke-width="2.2"/><path d="M3 13 L4.3 4.3 L13 3 L11.7 11.7z" fill="#f47a38"/><line x1="4.3" y1="4.3" x2="11.7" y2="11.7" stroke="#7a1a00" stroke-width="1.1"/></svg>
<div class="t" style="left:1306px;top:425px;color:#000">转至在线(N)</div>
<div class="t" style="left:1349px;top:425px;width:100px;text-align:right;color:#000;letter-spacing:-0.3px">Ctrl+K</div>
<svg style="left:1286px;top:442px" width="16" height="16" viewBox="0 0 16 16"><line x1="0.8" y1="15.2" x2="15.2" y2="0.8" stroke="#9a9a9a" stroke-width="2.2"/><path d="M2.5 13.5 L3.8 6.2 L6.2 8.6 L8.6 6.2 L6.2 3.8 L13.5 2.5 L12.2 9.8 L9.8 7.4 L7.4 9.8 L9.8 12.2z" fill="#a0a0a0"/><path d="M6.5 10.5 L7.5 9.5 M8.5 8.5 L9.5 7.5" stroke="#f4f4f4" stroke-width="1.3"/></svg>
<div class="t" style="left:1306px;top:443px;color:#8a8a8a">转至离线(F)</div>
<div class="t" style="left:1349px;top:443px;width:100px;text-align:right;color:#8a8a8a;letter-spacing:-0.3px">Ctrl+M</div>
<svg style="left:1286px;top:460px" width="16" height="16" viewBox="0 0 16 16"><rect x="0.5" y="0.5" width="12" height="14" fill="#fafcff" stroke="#8a98e8"/><path d="M3 2.5v4 Q3 9.5 6 9.5 Q8 9.5 8 7 M6 9.5 L6 12 Q6 13 9 12" fill="none" stroke="#1a2060" stroke-width="1.2"/><circle cx="9" cy="12" r="1.3" fill="#1a2060"/></svg>
<div class="t" style="left:1306px;top:461px;color:#000">在线和诊断(D)</div>
<div class="t" style="left:1349px;top:461px;width:100px;text-align:right;color:#000;letter-spacing:-0.3px">Ctrl+D</div>
<svg style="left:1286px;top:478px" width="16" height="16" viewBox="0 0 16 16"><text x="0" y="6" font-size="6.5" font-weight="bold" fill="#7a7a7a" font-family="Liberation Mono">NAME</text><rect x="1" y="7.5" width="2" height="5" fill="#c0c0c0" stroke="#8a8a8a" stroke-width=".5"/><path d="M9 8.5v3h-4 M5 11.5l2-2 M5 11.5l2 2" stroke="#8a8a8a" stroke-width="1.3" fill="none"/><rect x="1" y="13.5" width="14" height="1.5" fill="#a0a0a0"/></svg>
<div class="t" style="left:1306px;top:479px;color:#8a8a8a">分配设备名称</div>
<svg style="left:1286px;top:496px" width="16" height="16" viewBox="0 0 16 16"><rect x="1.5" y="1.5" width="13" height="13" rx="2" fill="#f4f4f4" stroke="#a8a8a8"/></svg>
<div class="t" style="left:1306px;top:497px;color:#8a8a8a">接收报警</div>
<div class="t" style="left:1306px;top:515px;color:#8a8a8a">更新并显示强制的操作数</div>
<div class="a" style="left:1284px;top:535px;width:172px;height:1px;background:#c8c8c8"></div>
<svg style="left:1286px;top:539px" width="16" height="16" viewBox="0 0 16 16"><rect x="9.5" y="0.5" width="5.5" height="5.5" fill="#f0f0f0" stroke="#a8a8a8" stroke-width=".7"/><rect x="0.5" y="10" width="5.5" height="5.5" fill="#f0f0f0" stroke="#a8a8a8" stroke-width=".7"/><g stroke="#8a8a8a" stroke-width="2.2"><line x1="2" y1="3" x2="12" y2="13"/><line x1="12" y1="3" x2="2" y2="13"/></g></svg>
<div class="t" style="left:1306px;top:540px;color:#8a8a8a">交叉引用</div>
<div class="t" style="left:1349px;top:540px;width:100px;text-align:right;color:#8a8a8a;letter-spacing:-0.3px">F11</div>
<svg style="left:1286px;top:557px" width="16" height="16" viewBox="0 0 16 16"><rect x="9.5" y="0.5" width="5.5" height="5.5" fill="#f0f0f0" stroke="#a8a8a8" stroke-width=".7"/><rect x="0.5" y="10" width="5.5" height="5.5" fill="#f0f0f0" stroke="#a8a8a8" stroke-width=".7"/><g stroke="#8a8a8a" stroke-width="2.2"><line x1="2" y1="3" x2="12" y2="13"/><line x1="12" y1="3" x2="2" y2="13"/></g></svg>
<div class="t" style="left:1306px;top:558px;color:#8a8a8a">交叉引用信息</div>
<div class="t" style="left:1349px;top:558px;width:100px;text-align:right;color:#8a8a8a;letter-spacing:-0.3px">Shift+F11</div>
<div class="a" style="left:1284px;top:578px;width:172px;height:1px;background:#c8c8c8"></div>
<div class="t" style="left:1306px;top:583px;color:#000">显示目录</div>
<div class="t" style="left:1349px;top:583px;width:100px;text-align:right;color:#000;letter-spacing:-0.3px">Ctrl+Shift+C</div>
<div class="a" style="left:1284px;top:603px;width:172px;height:1px;background:#c8c8c8"></div>
<div class="a" style="left:1303px;top:608px;width:151px;height:16px;background:#3467d6"></div>
<svg style="left:1286px;top:607px" width="16" height="16" viewBox="0 0 16 16"><rect x="0.5" y="0.5" width="14" height="14" fill="#f0f4ff" stroke="#6a7ae0"/><path d="M2 3h4M2 5h3M2 7h3" stroke="#1a2060" stroke-width=".8"/><circle cx="8.5" cy="8" r="3.8" fill="#fff" stroke="#1a1a40" stroke-width="1.5"/><path d="M11 10.5l4 4" stroke="#1a1a40" stroke-width="2"/></svg>
<div class="t" style="left:1306px;top:608px;color:#fff">属性</div>
<div class="t" style="left:1349px;top:608px;width:100px;text-align:right;color:#fff;letter-spacing:-0.3px">Alt+Enter</div>
<div class="a" style="left:1284px;top:628px;width:172px;height:1px;background:#c8c8c8"></div>
<div class="t" style="left:1306px;top:633px;color:#8a8a8a">转到设备视图</div>
<svg style="left:1286px;top:650px" width="16" height="16" viewBox="0 0 16 16"><rect x="0.5" y="2.5" width="9" height="12.5" fill="#f0f4ff" stroke="#6a7ae0"/><path d="M4 8.5h10" stroke="#0a0a40" stroke-width="2"/><path d="M11 4.5l4.5 4-4.5 4z" fill="#0a0a40"/></svg>
<div class="t" style="left:1306px;top:651px;color:#000">导出模块标签条(L)...</div>
<div class="a" style="left:1360px;top:607px;width:26px;height:26px;border-radius:50%;background:#f93b3b"></div>
<div class="t" style="left:1360px;top:612px;width:26px;text-align:center;color:#fff;font-size:16px;line-height:16px">2</div>

</div></body></html>
